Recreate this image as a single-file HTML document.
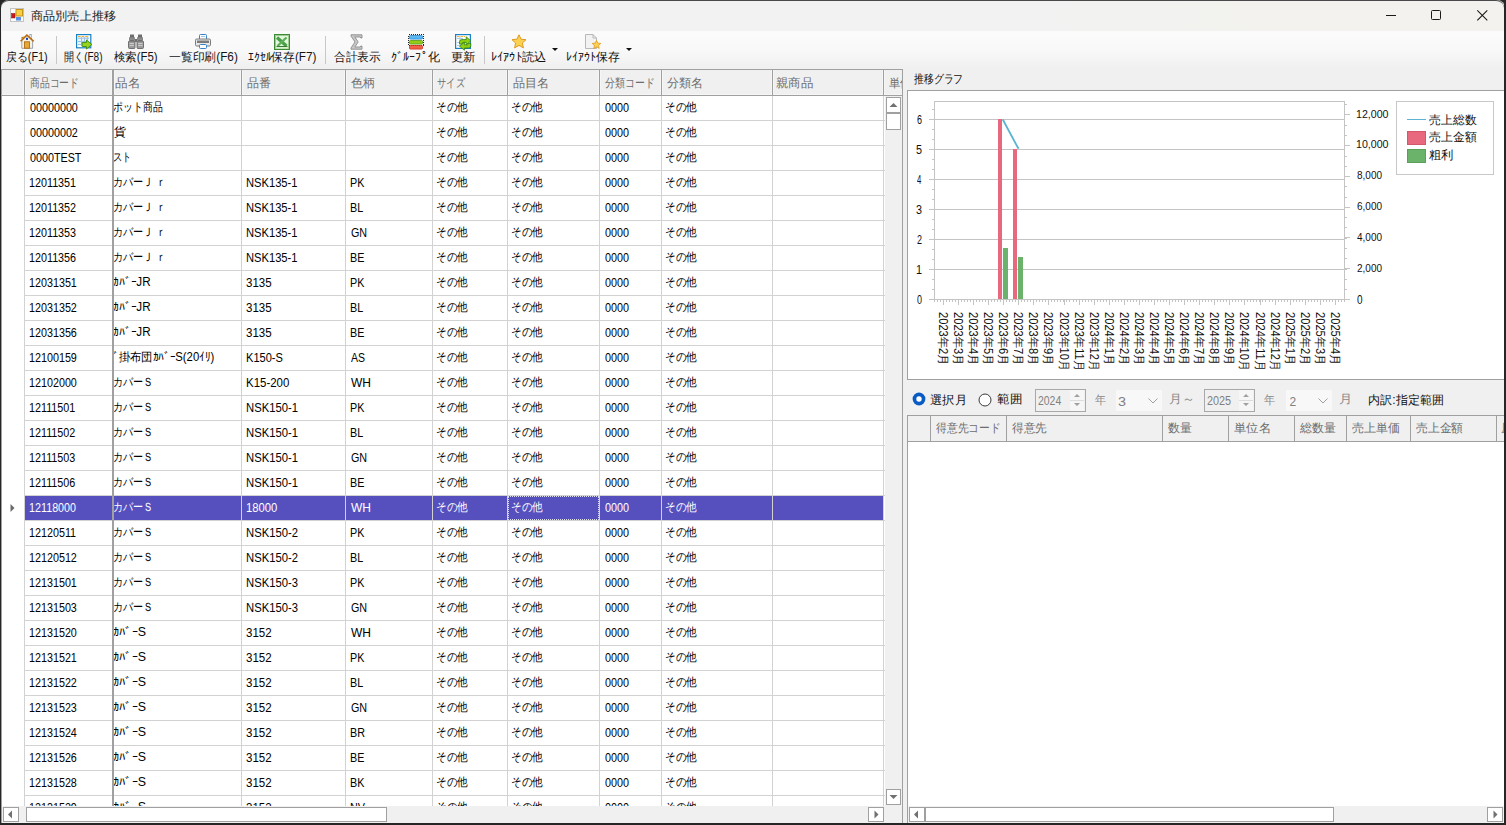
<!DOCTYPE html><html><head><meta charset='utf-8'><style>
*{box-sizing:border-box}
html,body{margin:0;padding:0}
body{width:1506px;height:825px;position:relative;overflow:hidden;background:#262626;font-family:'Liberation Sans', sans-serif;font-size:12px;color:#000}
.abs{position:absolute}
.t{position:absolute;white-space:nowrap;line-height:14px}
svg{position:absolute;overflow:visible}
</style></head><body>
<div class='abs' style='left:1px;top:0px;width:1504px;height:823px;background:#f0f0f0;border-radius:8px 8px 0 0'></div>
<div class='abs' style='left:1px;top:0px;width:1503px;height:31px;background:linear-gradient(to right,#f2f2f2 0,#f2f2f2 1030px,#f3f2ee 1290px,#f3f2ee 100%);border-radius:8px 8px 0 0;border-top:1px solid #4a4a4a'></div>
<svg style='left:10px;top:8px' width='14' height='14' viewBox='0 0 14 14'>
<rect x='0.5' y='0.5' width='13' height='13' fill='#f6f6f6' stroke='#c4c4c4'/>
<path d='M1.5 1.5 H5 V4.5 H1.5 Z M1.5 10 H5 V12.5 H1.5 Z M11 10 H12.5 V12.5 H11 Z' fill='#fff'/>
<rect x='6' y='1.5' width='6.5' height='6.5' fill='#f8cf48' stroke='#c89418' stroke-width='1'/>
<rect x='1.5' y='5.5' width='3.5' height='4.5' fill='#c41a1a' stroke='#901010' stroke-width='0.5'/>
<rect x='6' y='9' width='5' height='3.5' fill='#5a90e8'/>
</svg>
<div class='t' style='left:31.00px;top:8.60px;font-size:12px;transform:scale(1.0120,1.0000);transform-origin:0 0;color:#1b1b1b'>商品別売上推移</div>
<div class='abs' style='left:1386px;top:15px;width:10px;height:1px;background:#1a1a1a'></div>
<div class='abs' style='left:1431px;top:10px;width:10px;height:10px;border:1px solid #1a1a1a;border-radius:1.5px'></div>
<svg style='left:1477px;top:10px' width='11' height='11' viewBox='0 0 11 11'>
<path d='M0.3 0.3 L10.3 10.3 M10.3 0.3 L0.3 10.3' stroke='#1a1a1a' stroke-width='1.1'/></svg>
<div class='abs' style='left:2px;top:31px;width:1502px;height:38px;background:linear-gradient(#fbfbfb 0%,#f9f9f9 50%,#f0f0f0 95%)'></div>
<svg style='left:20px;top:34px' width='15' height='15' viewBox='0 0 15 15'>
<rect x='9.8' y='0.5' width='1.8' height='4.5' fill='#e8eef8' stroke='#9aa4b8' stroke-width='0.7'/>
<path d='M1.8 6.5 V14.3 H12.6 V6.5 L7 1.6 Z' fill='#f4f2e2' stroke='#8a8e98' stroke-width='0.8'/>
<path d='M0.6 7.2 L6.9 1 L13.6 7.4' fill='none' stroke='#b8680c' stroke-width='1.5'/>
<path d='M1.5 5.5 L4.5 2.5 L1.5 3 Z' fill='#c07818'/>
<rect x='4.5' y='7.8' width='5' height='6.4' fill='#e8a838' stroke='#b06a10' stroke-width='0.9'/>
<rect x='6' y='3.8' width='2' height='2.1' fill='#1040c0'/>
</svg>
<svg style='left:76px;top:34px' width='17' height='16' viewBox='0 0 17 16'>
<rect x='0.6' y='0.6' width='14.2' height='13.2' fill='#fff' stroke='#1a80c4' stroke-width='1.2'/>
<path d='M2 2.6 H13' stroke='#f4b030' stroke-width='1.2' stroke-dasharray='2.6 1'/>
<rect x='2' y='3.2' width='11' height='6.5' fill='#e4f4fc'/>
<path d='M2 4.2 H13 M2 7.5 H13 M2 10.5 H6 M5.5 3.2 V12 M8.5 3.2 V9 M11.5 3.2 V8' stroke='#9cc0e8' stroke-width='1'/>
<path d='M6.2 8.5 H10.5 V6 L15.8 10.5 L10.5 15 V12.5 H6.2 Z' fill='#98d418' stroke='#3a8a10' stroke-width='0.9'/>
</svg>
<svg style='left:128px;top:34px' width='16' height='15' viewBox='0 0 16 15'>
<rect x='2' y='0.5' width='4' height='2.5' fill='#707070'/>
<rect x='10' y='0.5' width='4' height='2.5' fill='#707070'/>
<rect x='1.5' y='3' width='5' height='4' rx='1' fill='#8a8a8a' stroke='#606060' stroke-width='0.6'/>
<rect x='9.5' y='3' width='5' height='4' rx='1' fill='#8a8a8a' stroke='#606060' stroke-width='0.6'/>
<rect x='0.5' y='7' width='6.5' height='7.5' rx='1' fill='#9a9a9a' stroke='#5a5a5a' stroke-width='0.8'/>
<rect x='9' y='7' width='6.5' height='7.5' rx='1' fill='#9a9a9a' stroke='#5a5a5a' stroke-width='0.8'/>
<path d='M1.5 9.5 H6 M1.5 11.5 H6 M10 9.5 H14.5 M10 11.5 H14.5' stroke='#d8d8d8' stroke-width='0.8'/>
<rect x='7' y='5' width='2' height='3' fill='#707070'/>
</svg>
<svg style='left:195px;top:34px' width='16' height='15' viewBox='0 0 16 15'>
<rect x='4.5' y='0.5' width='7' height='6' rx='1' fill='#fff' stroke='#3a80c8' stroke-width='1'/>
<rect x='6' y='2' width='4' height='1' fill='#9cc8f0'/>
<rect x='0.5' y='5' width='15' height='7' rx='1.2' fill='#e8e8e8' stroke='#7a7a7a' stroke-width='1'/>
<rect x='2' y='6.5' width='12' height='2.5' fill='#7c7c7c'/>
<rect x='4.5' y='10.5' width='7' height='4' rx='1' fill='#fff' stroke='#3a80c8' stroke-width='1'/>
</svg>
<svg style='left:274px;top:34px' width='16' height='16' viewBox='0 0 16 16'>
<rect x='0.5' y='0.5' width='15' height='15' fill='#e4f6de' stroke='#3c8a34' stroke-width='1'/>
<rect x='1.5' y='1.5' width='13' height='13' fill='none' stroke='#9ccc90' stroke-width='1'/>
<path d='M3 3.5 L12.5 12' stroke='#4aa04a' stroke-width='3.2'/>
<path d='M12.5 3.5 L3.5 12' stroke='#5cb05a' stroke-width='2.4'/>
<path d='M2.5 12.5 H13.5' stroke='#3a7a30' stroke-width='1'/>
<rect x='2' y='13' width='12' height='1.6' fill='#d8f2d0'/>
</svg>
<svg style='left:350px;top:34px' width='13' height='16' viewBox='0 0 13 16'>
<path d='M1 0.8 H12 V4 H10.8 L10.2 3 H4.8 L8.2 8 L4.8 13 H10.2 L10.8 12 H12 V15.2 H1 V14 L5 8 L1 2 Z' fill='#c8c8c8' stroke='#8c8c8c' stroke-width='0.9' stroke-linejoin='round'/>
</svg>
<svg style='left:408px;top:34px' width='16' height='16' viewBox='0 0 16 16'>
<rect x='0.5' y='0.5' width='15' height='11' fill='none' stroke='#222' stroke-width='1' stroke-dasharray='1 1' shape-rendering='crispEdges'/>
<rect x='1.5' y='1.5' width='13' height='3.6' rx='1' fill='#5ab8f0' stroke='#2a88d0' stroke-width='0.8'/>
<rect x='1.5' y='6.5' width='13' height='3.6' rx='1' fill='#90cc18' stroke='#5a9a10' stroke-width='0.8'/>
<rect x='1.5' y='11.5' width='13' height='3.6' rx='1' fill='#f26048' stroke='#d03020' stroke-width='0.8'/>
</svg>
<svg style='left:455px;top:34px' width='17' height='16' viewBox='0 0 17 16'>
<rect x='0.6' y='0.6' width='14.8' height='13.8' fill='#fff' stroke='#1a80c8' stroke-width='1.2'/>
<path d='M2 2.5 H10' stroke='#f4b030' stroke-width='1.2' stroke-dasharray='2.5 1'/>
<path d='M2 4.5 H8 M2 8.5 H5 M2 11.5 H5 M5 3 V13' stroke='#a8ccee' stroke-width='1'/>
<path d='M4.5 10 V7.8 Q4.5 5.6 7 5.6 H11.2 V2.8 L15.8 6.9 L11.2 11 V8.4 H7.6 Q7.2 8.4 7.2 10 Z' fill='#90d010' stroke='#2e8010' stroke-width='0.8'/>
<path d='M15.8 9.5 V11.8 Q15.8 14 13.3 14 H9.4 V16.2 L4.6 12.2 L9.4 8.2 V10.8 H12.6 Q13.2 10.8 13.2 9.5 Z' fill='#90d010' stroke='#2e8010' stroke-width='0.8'/>
</svg>
<svg style='left:511px;top:34px' width='16' height='15' viewBox='0 0 16 15'>
<path d='M8 0.8 L10.1 5.2 L15 5.7 L11.4 9 L12.4 13.9 L8 11.4 L3.6 13.9 L4.6 9 L1 5.7 L5.9 5.2 Z' fill='#fcd050' stroke='#e09a20' stroke-width='1'/>
</svg>
<svg style='left:585px;top:34px' width='17' height='16' viewBox='0 0 17 16'>
<path d='M0.5 0.5 H8 L11.5 4 V14.5 H0.5 Z' fill='#f2f2f2' stroke='#b8b8b8' stroke-width='1'/>
<path d='M8 0.5 V4 H11.5' fill='none' stroke='#b8b8b8' stroke-width='1'/>
<path d='M11.5 6.5 L12.8 9.1 L15.8 9.4 L13.6 11.4 L14.2 14.4 L11.5 12.9 L8.8 14.4 L9.4 11.4 L7.2 9.4 L10.2 9.1 Z' fill='#fcd050' stroke='#e09a20' stroke-width='0.8'/>
</svg>
<div class='t' style='left:5.69px;top:50.40px;font-size:12px;transform:scale(0.9068,1.0000);transform-origin:0 0;color:#141414'>戻る(F1)</div>
<div class='t' style='left:63.86px;top:50.40px;font-size:12px;transform:scale(0.8386,1.0000);transform-origin:0 0;color:#141414'>開く(F8)</div>
<div class='t' style='left:114.20px;top:50.40px;font-size:12px;transform:scale(0.9489,1.0000);transform-origin:0 0;color:#141414'>検索(F5)</div>
<div class='t' style='left:168.62px;top:50.40px;font-size:12px;transform:scale(0.9838,1.0000);transform-origin:0 0;color:#141414'>一覧印刷(F6)</div>
<div class='t' style='left:247.80px;top:50.40px;font-size:12px;transform:scale(0.9783,1.0000);transform-origin:0 0;color:#141414'>ｴｸｾﾙ保存(F7)</div>
<div class='t' style='left:334.00px;top:50.40px;font-size:12px;transform:scale(0.9688,1.0000);transform-origin:0 0;color:#141414'>合計表示</div>
<div class='t' style='left:390.58px;top:50.40px;font-size:12px;transform:scale(1.0170,1.0000);transform-origin:0 0;color:#141414'>ｸﾞﾙｰﾌﾟ化</div>
<div class='t' style='left:450.96px;top:50.40px;font-size:12px;transform:scale(1.0364,1.0000);transform-origin:0 0;color:#141414'>更新</div>
<div class='t' style='left:491.18px;top:50.40px;font-size:12px;transform:scale(1.0231,1.0000);transform-origin:0 0;color:#141414'>ﾚｲｱｳﾄ読込</div>
<div class='t' style='left:565.61px;top:50.40px;font-size:12px;transform:scale(0.9925,1.0000);transform-origin:0 0;color:#141414'>ﾚｲｱｳﾄ保存</div>
<div class='abs' style='left:56px;top:36px;width:1px;height:28px;background:#c8c8c8'></div>
<div class='abs' style='left:325px;top:36px;width:1px;height:28px;background:#c8c8c8'></div>
<div class='abs' style='left:484px;top:36px;width:1px;height:28px;background:#c8c8c8'></div>
<svg style='left:552px;top:48px' width='6' height='3' viewBox='0 0 6 3'><path d='M0 0 H6 L3 3 Z' fill='#111'/></svg>
<svg style='left:626px;top:48px' width='6' height='3' viewBox='0 0 6 3'><path d='M0 0 H6 L3 3 Z' fill='#111'/></svg>
<div class='abs' style='left:1px;top:69px;width:902px;height:754px;background:#fff'></div>
<div class='abs' style='left:2px;top:70px;width:900px;height:25px;background:#f0f0f0'></div>
<div class='t' style='left:30.00px;top:101.00px;font-size:12px;transform:scale(0.8962,1.0000);transform-origin:0 0;color:#000'>00000000</div>
<div class='t' style='left:113.18px;top:100.00px;font-size:12px;transform:scale(0.8241,1.0000);transform-origin:0 0;color:#000'>ポット商品</div>
<div class='t' style='left:436.11px;top:100.00px;font-size:12px;transform:scale(0.8857,1.0000);transform-origin:0 0;color:#000'>その他</div>
<div class='t' style='left:511.11px;top:100.00px;font-size:12px;transform:scale(0.8857,1.0000);transform-origin:0 0;color:#000'>その他</div>
<div class='t' style='left:605.00px;top:101.00px;font-size:12px;transform:scale(0.9000,1.0000);transform-origin:0 0;color:#000'>0000</div>
<div class='t' style='left:665.11px;top:100.00px;font-size:12px;transform:scale(0.8857,1.0000);transform-origin:0 0;color:#000'>その他</div>
<div class='abs' style='left:24px;top:120px;width:861px;height:1px;background:#d2d2d2'></div>
<div class='t' style='left:30.00px;top:126.00px;font-size:12px;transform:scale(0.8962,1.0000);transform-origin:0 0;color:#000'>00000002</div>
<div class='t' style='left:114.00px;top:125.00px;font-size:12px;transform:scale(1.0000,1.0000);transform-origin:0 0;color:#000'>貨</div>
<div class='t' style='left:436.11px;top:125.00px;font-size:12px;transform:scale(0.8857,1.0000);transform-origin:0 0;color:#000'>その他</div>
<div class='t' style='left:511.11px;top:125.00px;font-size:12px;transform:scale(0.8857,1.0000);transform-origin:0 0;color:#000'>その他</div>
<div class='t' style='left:605.00px;top:126.00px;font-size:12px;transform:scale(0.9000,1.0000);transform-origin:0 0;color:#000'>0000</div>
<div class='t' style='left:665.11px;top:125.00px;font-size:12px;transform:scale(0.8857,1.0000);transform-origin:0 0;color:#000'>その他</div>
<div class='abs' style='left:24px;top:145px;width:861px;height:1px;background:#d2d2d2'></div>
<div class='t' style='left:30.00px;top:151.00px;font-size:12px;transform:scale(0.8962,1.0000);transform-origin:0 0;color:#000'>0000TEST</div>
<div class='t' style='left:113.22px;top:150.00px;font-size:12px;transform:scale(0.7750,1.0000);transform-origin:0 0;color:#000'>スト</div>
<div class='t' style='left:436.11px;top:150.00px;font-size:12px;transform:scale(0.8857,1.0000);transform-origin:0 0;color:#000'>その他</div>
<div class='t' style='left:511.11px;top:150.00px;font-size:12px;transform:scale(0.8857,1.0000);transform-origin:0 0;color:#000'>その他</div>
<div class='t' style='left:605.00px;top:151.00px;font-size:12px;transform:scale(0.9000,1.0000);transform-origin:0 0;color:#000'>0000</div>
<div class='t' style='left:665.11px;top:150.00px;font-size:12px;transform:scale(0.8857,1.0000);transform-origin:0 0;color:#000'>その他</div>
<div class='abs' style='left:24px;top:170px;width:861px;height:1px;background:#d2d2d2'></div>
<div class='t' style='left:29.10px;top:176.00px;font-size:12px;transform:scale(0.8962,1.0000);transform-origin:0 0;color:#000'>12011351</div>
<div class='t' style='left:113.16px;top:175.00px;font-size:12px;transform:scale(0.8448,1.0000);transform-origin:0 0;color:#000'>カバーＪ ｒ</div>
<div class='t' style='left:246.07px;top:176.00px;font-size:12px;transform:scale(0.9296,1.0000);transform-origin:0 0;color:#000'>NSK135-1</div>
<div class='t' style='left:350.11px;top:176.00px;font-size:12px;transform:scale(0.8933,1.0000);transform-origin:0 0;color:#000'>PK</div>
<div class='t' style='left:436.11px;top:175.00px;font-size:12px;transform:scale(0.8857,1.0000);transform-origin:0 0;color:#000'>その他</div>
<div class='t' style='left:511.11px;top:175.00px;font-size:12px;transform:scale(0.8857,1.0000);transform-origin:0 0;color:#000'>その他</div>
<div class='t' style='left:605.00px;top:176.00px;font-size:12px;transform:scale(0.9000,1.0000);transform-origin:0 0;color:#000'>0000</div>
<div class='t' style='left:665.11px;top:175.00px;font-size:12px;transform:scale(0.8857,1.0000);transform-origin:0 0;color:#000'>その他</div>
<div class='abs' style='left:24px;top:195px;width:861px;height:1px;background:#d2d2d2'></div>
<div class='t' style='left:29.10px;top:201.00px;font-size:12px;transform:scale(0.8962,1.0000);transform-origin:0 0;color:#000'>12011352</div>
<div class='t' style='left:113.16px;top:200.00px;font-size:12px;transform:scale(0.8448,1.0000);transform-origin:0 0;color:#000'>カバーＪ ｒ</div>
<div class='t' style='left:246.07px;top:201.00px;font-size:12px;transform:scale(0.9296,1.0000);transform-origin:0 0;color:#000'>NSK135-1</div>
<div class='t' style='left:350.10px;top:201.00px;font-size:12px;transform:scale(0.8962,1.0000);transform-origin:0 0;color:#000'>BL</div>
<div class='t' style='left:436.11px;top:200.00px;font-size:12px;transform:scale(0.8857,1.0000);transform-origin:0 0;color:#000'>その他</div>
<div class='t' style='left:511.11px;top:200.00px;font-size:12px;transform:scale(0.8857,1.0000);transform-origin:0 0;color:#000'>その他</div>
<div class='t' style='left:605.00px;top:201.00px;font-size:12px;transform:scale(0.9000,1.0000);transform-origin:0 0;color:#000'>0000</div>
<div class='t' style='left:665.11px;top:200.00px;font-size:12px;transform:scale(0.8857,1.0000);transform-origin:0 0;color:#000'>その他</div>
<div class='abs' style='left:24px;top:220px;width:861px;height:1px;background:#d2d2d2'></div>
<div class='t' style='left:29.10px;top:226.00px;font-size:12px;transform:scale(0.8962,1.0000);transform-origin:0 0;color:#000'>12011353</div>
<div class='t' style='left:113.16px;top:225.00px;font-size:12px;transform:scale(0.8448,1.0000);transform-origin:0 0;color:#000'>カバーＪ ｒ</div>
<div class='t' style='left:246.07px;top:226.00px;font-size:12px;transform:scale(0.9296,1.0000);transform-origin:0 0;color:#000'>NSK135-1</div>
<div class='t' style='left:351.00px;top:226.00px;font-size:12px;transform:scale(0.8962,1.0000);transform-origin:0 0;color:#000'>GN</div>
<div class='t' style='left:436.11px;top:225.00px;font-size:12px;transform:scale(0.8857,1.0000);transform-origin:0 0;color:#000'>その他</div>
<div class='t' style='left:511.11px;top:225.00px;font-size:12px;transform:scale(0.8857,1.0000);transform-origin:0 0;color:#000'>その他</div>
<div class='t' style='left:605.00px;top:226.00px;font-size:12px;transform:scale(0.9000,1.0000);transform-origin:0 0;color:#000'>0000</div>
<div class='t' style='left:665.11px;top:225.00px;font-size:12px;transform:scale(0.8857,1.0000);transform-origin:0 0;color:#000'>その他</div>
<div class='abs' style='left:24px;top:245px;width:861px;height:1px;background:#d2d2d2'></div>
<div class='t' style='left:29.10px;top:251.00px;font-size:12px;transform:scale(0.8962,1.0000);transform-origin:0 0;color:#000'>12011356</div>
<div class='t' style='left:113.16px;top:250.00px;font-size:12px;transform:scale(0.8448,1.0000);transform-origin:0 0;color:#000'>カバーＪ ｒ</div>
<div class='t' style='left:246.07px;top:251.00px;font-size:12px;transform:scale(0.9296,1.0000);transform-origin:0 0;color:#000'>NSK135-1</div>
<div class='t' style='left:350.10px;top:251.00px;font-size:12px;transform:scale(0.8962,1.0000);transform-origin:0 0;color:#000'>BE</div>
<div class='t' style='left:436.11px;top:250.00px;font-size:12px;transform:scale(0.8857,1.0000);transform-origin:0 0;color:#000'>その他</div>
<div class='t' style='left:511.11px;top:250.00px;font-size:12px;transform:scale(0.8857,1.0000);transform-origin:0 0;color:#000'>その他</div>
<div class='t' style='left:605.00px;top:251.00px;font-size:12px;transform:scale(0.9000,1.0000);transform-origin:0 0;color:#000'>0000</div>
<div class='t' style='left:665.11px;top:250.00px;font-size:12px;transform:scale(0.8857,1.0000);transform-origin:0 0;color:#000'>その他</div>
<div class='abs' style='left:24px;top:270px;width:861px;height:1px;background:#d2d2d2'></div>
<div class='t' style='left:29.10px;top:276.00px;font-size:12px;transform:scale(0.8962,1.0000);transform-origin:0 0;color:#000'>12031351</div>
<div class='t' style='left:113.03px;top:275.00px;font-size:12px;transform:scale(0.9730,1.0000);transform-origin:0 0;color:#000'>ｶﾊﾞｰJR</div>
<div class='t' style='left:246.04px;top:276.00px;font-size:12px;transform:scale(0.9600,1.0000);transform-origin:0 0;color:#000'>3135</div>
<div class='t' style='left:350.11px;top:276.00px;font-size:12px;transform:scale(0.8933,1.0000);transform-origin:0 0;color:#000'>PK</div>
<div class='t' style='left:436.11px;top:275.00px;font-size:12px;transform:scale(0.8857,1.0000);transform-origin:0 0;color:#000'>その他</div>
<div class='t' style='left:511.11px;top:275.00px;font-size:12px;transform:scale(0.8857,1.0000);transform-origin:0 0;color:#000'>その他</div>
<div class='t' style='left:605.00px;top:276.00px;font-size:12px;transform:scale(0.9000,1.0000);transform-origin:0 0;color:#000'>0000</div>
<div class='t' style='left:665.11px;top:275.00px;font-size:12px;transform:scale(0.8857,1.0000);transform-origin:0 0;color:#000'>その他</div>
<div class='abs' style='left:24px;top:295px;width:861px;height:1px;background:#d2d2d2'></div>
<div class='t' style='left:29.10px;top:301.00px;font-size:12px;transform:scale(0.8962,1.0000);transform-origin:0 0;color:#000'>12031352</div>
<div class='t' style='left:113.03px;top:300.00px;font-size:12px;transform:scale(0.9730,1.0000);transform-origin:0 0;color:#000'>ｶﾊﾞｰJR</div>
<div class='t' style='left:246.04px;top:301.00px;font-size:12px;transform:scale(0.9600,1.0000);transform-origin:0 0;color:#000'>3135</div>
<div class='t' style='left:350.10px;top:301.00px;font-size:12px;transform:scale(0.8962,1.0000);transform-origin:0 0;color:#000'>BL</div>
<div class='t' style='left:436.11px;top:300.00px;font-size:12px;transform:scale(0.8857,1.0000);transform-origin:0 0;color:#000'>その他</div>
<div class='t' style='left:511.11px;top:300.00px;font-size:12px;transform:scale(0.8857,1.0000);transform-origin:0 0;color:#000'>その他</div>
<div class='t' style='left:605.00px;top:301.00px;font-size:12px;transform:scale(0.9000,1.0000);transform-origin:0 0;color:#000'>0000</div>
<div class='t' style='left:665.11px;top:300.00px;font-size:12px;transform:scale(0.8857,1.0000);transform-origin:0 0;color:#000'>その他</div>
<div class='abs' style='left:24px;top:320px;width:861px;height:1px;background:#d2d2d2'></div>
<div class='t' style='left:29.10px;top:326.00px;font-size:12px;transform:scale(0.8962,1.0000);transform-origin:0 0;color:#000'>12031356</div>
<div class='t' style='left:113.03px;top:325.00px;font-size:12px;transform:scale(0.9730,1.0000);transform-origin:0 0;color:#000'>ｶﾊﾞｰJR</div>
<div class='t' style='left:246.04px;top:326.00px;font-size:12px;transform:scale(0.9600,1.0000);transform-origin:0 0;color:#000'>3135</div>
<div class='t' style='left:350.10px;top:326.00px;font-size:12px;transform:scale(0.8962,1.0000);transform-origin:0 0;color:#000'>BE</div>
<div class='t' style='left:436.11px;top:325.00px;font-size:12px;transform:scale(0.8857,1.0000);transform-origin:0 0;color:#000'>その他</div>
<div class='t' style='left:511.11px;top:325.00px;font-size:12px;transform:scale(0.8857,1.0000);transform-origin:0 0;color:#000'>その他</div>
<div class='t' style='left:605.00px;top:326.00px;font-size:12px;transform:scale(0.9000,1.0000);transform-origin:0 0;color:#000'>0000</div>
<div class='t' style='left:665.11px;top:325.00px;font-size:12px;transform:scale(0.8857,1.0000);transform-origin:0 0;color:#000'>その他</div>
<div class='abs' style='left:24px;top:345px;width:861px;height:1px;background:#d2d2d2'></div>
<div class='t' style='left:29.10px;top:351.00px;font-size:12px;transform:scale(0.8962,1.0000);transform-origin:0 0;color:#000'>12100159</div>
<div class='t' style='left:113.06px;top:350.00px;font-size:12px;transform:scale(0.9434,1.0000);transform-origin:0 0;color:#000'>ﾞ掛布団ｶﾊﾞｰS(20ｲﾘ)</div>
<div class='t' style='left:246.08px;top:351.00px;font-size:12px;transform:scale(0.9231,1.0000);transform-origin:0 0;color:#000'>K150-S</div>
<div class='t' style='left:351.00px;top:351.00px;font-size:12px;transform:scale(0.8750,1.0000);transform-origin:0 0;color:#000'>AS</div>
<div class='t' style='left:436.11px;top:350.00px;font-size:12px;transform:scale(0.8857,1.0000);transform-origin:0 0;color:#000'>その他</div>
<div class='t' style='left:511.11px;top:350.00px;font-size:12px;transform:scale(0.8857,1.0000);transform-origin:0 0;color:#000'>その他</div>
<div class='t' style='left:605.00px;top:351.00px;font-size:12px;transform:scale(0.9000,1.0000);transform-origin:0 0;color:#000'>0000</div>
<div class='t' style='left:665.11px;top:350.00px;font-size:12px;transform:scale(0.8857,1.0000);transform-origin:0 0;color:#000'>その他</div>
<div class='abs' style='left:24px;top:370px;width:861px;height:1px;background:#d2d2d2'></div>
<div class='t' style='left:29.10px;top:376.00px;font-size:12px;transform:scale(0.8962,1.0000);transform-origin:0 0;color:#000'>12102000</div>
<div class='t' style='left:113.16px;top:375.00px;font-size:12px;transform:scale(0.8409,1.0000);transform-origin:0 0;color:#000'>カバーＳ</div>
<div class='t' style='left:246.05px;top:376.00px;font-size:12px;transform:scale(0.9545,1.0000);transform-origin:0 0;color:#000'>K15-200</div>
<div class='t' style='left:351.00px;top:376.00px;font-size:12px;transform:scale(1.0000,1.0000);transform-origin:0 0;color:#000'>WH</div>
<div class='t' style='left:436.11px;top:375.00px;font-size:12px;transform:scale(0.8857,1.0000);transform-origin:0 0;color:#000'>その他</div>
<div class='t' style='left:511.11px;top:375.00px;font-size:12px;transform:scale(0.8857,1.0000);transform-origin:0 0;color:#000'>その他</div>
<div class='t' style='left:605.00px;top:376.00px;font-size:12px;transform:scale(0.9000,1.0000);transform-origin:0 0;color:#000'>0000</div>
<div class='t' style='left:665.11px;top:375.00px;font-size:12px;transform:scale(0.8857,1.0000);transform-origin:0 0;color:#000'>その他</div>
<div class='abs' style='left:24px;top:395px;width:861px;height:1px;background:#d2d2d2'></div>
<div class='t' style='left:29.10px;top:401.00px;font-size:12px;transform:scale(0.8962,1.0000);transform-origin:0 0;color:#000'>12111501</div>
<div class='t' style='left:113.16px;top:400.00px;font-size:12px;transform:scale(0.8409,1.0000);transform-origin:0 0;color:#000'>カバーＳ</div>
<div class='t' style='left:246.06px;top:401.00px;font-size:12px;transform:scale(0.9389,1.0000);transform-origin:0 0;color:#000'>NSK150-1</div>
<div class='t' style='left:350.11px;top:401.00px;font-size:12px;transform:scale(0.8933,1.0000);transform-origin:0 0;color:#000'>PK</div>
<div class='t' style='left:436.11px;top:400.00px;font-size:12px;transform:scale(0.8857,1.0000);transform-origin:0 0;color:#000'>その他</div>
<div class='t' style='left:511.11px;top:400.00px;font-size:12px;transform:scale(0.8857,1.0000);transform-origin:0 0;color:#000'>その他</div>
<div class='t' style='left:605.00px;top:401.00px;font-size:12px;transform:scale(0.9000,1.0000);transform-origin:0 0;color:#000'>0000</div>
<div class='t' style='left:665.11px;top:400.00px;font-size:12px;transform:scale(0.8857,1.0000);transform-origin:0 0;color:#000'>その他</div>
<div class='abs' style='left:24px;top:420px;width:861px;height:1px;background:#d2d2d2'></div>
<div class='t' style='left:29.10px;top:426.00px;font-size:12px;transform:scale(0.8962,1.0000);transform-origin:0 0;color:#000'>12111502</div>
<div class='t' style='left:113.16px;top:425.00px;font-size:12px;transform:scale(0.8409,1.0000);transform-origin:0 0;color:#000'>カバーＳ</div>
<div class='t' style='left:246.06px;top:426.00px;font-size:12px;transform:scale(0.9389,1.0000);transform-origin:0 0;color:#000'>NSK150-1</div>
<div class='t' style='left:350.10px;top:426.00px;font-size:12px;transform:scale(0.8962,1.0000);transform-origin:0 0;color:#000'>BL</div>
<div class='t' style='left:436.11px;top:425.00px;font-size:12px;transform:scale(0.8857,1.0000);transform-origin:0 0;color:#000'>その他</div>
<div class='t' style='left:511.11px;top:425.00px;font-size:12px;transform:scale(0.8857,1.0000);transform-origin:0 0;color:#000'>その他</div>
<div class='t' style='left:605.00px;top:426.00px;font-size:12px;transform:scale(0.9000,1.0000);transform-origin:0 0;color:#000'>0000</div>
<div class='t' style='left:665.11px;top:425.00px;font-size:12px;transform:scale(0.8857,1.0000);transform-origin:0 0;color:#000'>その他</div>
<div class='abs' style='left:24px;top:445px;width:861px;height:1px;background:#d2d2d2'></div>
<div class='t' style='left:29.10px;top:451.00px;font-size:12px;transform:scale(0.8962,1.0000);transform-origin:0 0;color:#000'>12111503</div>
<div class='t' style='left:113.16px;top:450.00px;font-size:12px;transform:scale(0.8409,1.0000);transform-origin:0 0;color:#000'>カバーＳ</div>
<div class='t' style='left:246.06px;top:451.00px;font-size:12px;transform:scale(0.9389,1.0000);transform-origin:0 0;color:#000'>NSK150-1</div>
<div class='t' style='left:351.00px;top:451.00px;font-size:12px;transform:scale(0.8962,1.0000);transform-origin:0 0;color:#000'>GN</div>
<div class='t' style='left:436.11px;top:450.00px;font-size:12px;transform:scale(0.8857,1.0000);transform-origin:0 0;color:#000'>その他</div>
<div class='t' style='left:511.11px;top:450.00px;font-size:12px;transform:scale(0.8857,1.0000);transform-origin:0 0;color:#000'>その他</div>
<div class='t' style='left:605.00px;top:451.00px;font-size:12px;transform:scale(0.9000,1.0000);transform-origin:0 0;color:#000'>0000</div>
<div class='t' style='left:665.11px;top:450.00px;font-size:12px;transform:scale(0.8857,1.0000);transform-origin:0 0;color:#000'>その他</div>
<div class='abs' style='left:24px;top:470px;width:861px;height:1px;background:#d2d2d2'></div>
<div class='t' style='left:29.10px;top:476.00px;font-size:12px;transform:scale(0.8962,1.0000);transform-origin:0 0;color:#000'>12111506</div>
<div class='t' style='left:113.16px;top:475.00px;font-size:12px;transform:scale(0.8409,1.0000);transform-origin:0 0;color:#000'>カバーＳ</div>
<div class='t' style='left:246.06px;top:476.00px;font-size:12px;transform:scale(0.9389,1.0000);transform-origin:0 0;color:#000'>NSK150-1</div>
<div class='t' style='left:350.10px;top:476.00px;font-size:12px;transform:scale(0.8962,1.0000);transform-origin:0 0;color:#000'>BE</div>
<div class='t' style='left:436.11px;top:475.00px;font-size:12px;transform:scale(0.8857,1.0000);transform-origin:0 0;color:#000'>その他</div>
<div class='t' style='left:511.11px;top:475.00px;font-size:12px;transform:scale(0.8857,1.0000);transform-origin:0 0;color:#000'>その他</div>
<div class='t' style='left:605.00px;top:476.00px;font-size:12px;transform:scale(0.9000,1.0000);transform-origin:0 0;color:#000'>0000</div>
<div class='t' style='left:665.11px;top:475.00px;font-size:12px;transform:scale(0.8857,1.0000);transform-origin:0 0;color:#000'>その他</div>
<div class='abs' style='left:24px;top:495px;width:861px;height:1px;background:#d2d2d2'></div>
<div class='abs' style='left:25px;top:496px;width:859px;height:24px;background:#5650bf'></div>
<div class='t' style='left:29.10px;top:501.00px;font-size:12px;transform:scale(0.8962,1.0000);transform-origin:0 0;color:#fff'>12118000</div>
<div class='t' style='left:113.16px;top:500.00px;font-size:12px;transform:scale(0.8409,1.0000);transform-origin:0 0;color:#fff'>カバーＳ</div>
<div class='t' style='left:246.06px;top:501.00px;font-size:12px;transform:scale(0.9375,1.0000);transform-origin:0 0;color:#fff'>18000</div>
<div class='t' style='left:351.00px;top:501.00px;font-size:12px;transform:scale(1.0000,1.0000);transform-origin:0 0;color:#fff'>WH</div>
<div class='t' style='left:436.11px;top:500.00px;font-size:12px;transform:scale(0.8857,1.0000);transform-origin:0 0;color:#fff'>その他</div>
<div class='t' style='left:511.11px;top:500.00px;font-size:12px;transform:scale(0.8857,1.0000);transform-origin:0 0;color:#fff'>その他</div>
<div class='t' style='left:605.00px;top:501.00px;font-size:12px;transform:scale(0.9000,1.0000);transform-origin:0 0;color:#fff'>0000</div>
<div class='t' style='left:665.11px;top:500.00px;font-size:12px;transform:scale(0.8857,1.0000);transform-origin:0 0;color:#fff'>その他</div>
<div class='abs' style='left:24px;top:520px;width:861px;height:1px;background:#d2d2d2'></div>
<div class='t' style='left:29.10px;top:526.00px;font-size:12px;transform:scale(0.8962,1.0000);transform-origin:0 0;color:#000'>12120511</div>
<div class='t' style='left:113.16px;top:525.00px;font-size:12px;transform:scale(0.8409,1.0000);transform-origin:0 0;color:#000'>カバーＳ</div>
<div class='t' style='left:246.06px;top:526.00px;font-size:12px;transform:scale(0.9389,1.0000);transform-origin:0 0;color:#000'>NSK150-2</div>
<div class='t' style='left:350.11px;top:526.00px;font-size:12px;transform:scale(0.8933,1.0000);transform-origin:0 0;color:#000'>PK</div>
<div class='t' style='left:436.11px;top:525.00px;font-size:12px;transform:scale(0.8857,1.0000);transform-origin:0 0;color:#000'>その他</div>
<div class='t' style='left:511.11px;top:525.00px;font-size:12px;transform:scale(0.8857,1.0000);transform-origin:0 0;color:#000'>その他</div>
<div class='t' style='left:605.00px;top:526.00px;font-size:12px;transform:scale(0.9000,1.0000);transform-origin:0 0;color:#000'>0000</div>
<div class='t' style='left:665.11px;top:525.00px;font-size:12px;transform:scale(0.8857,1.0000);transform-origin:0 0;color:#000'>その他</div>
<div class='abs' style='left:24px;top:545px;width:861px;height:1px;background:#d2d2d2'></div>
<div class='t' style='left:29.10px;top:551.00px;font-size:12px;transform:scale(0.8962,1.0000);transform-origin:0 0;color:#000'>12120512</div>
<div class='t' style='left:113.16px;top:550.00px;font-size:12px;transform:scale(0.8409,1.0000);transform-origin:0 0;color:#000'>カバーＳ</div>
<div class='t' style='left:246.06px;top:551.00px;font-size:12px;transform:scale(0.9389,1.0000);transform-origin:0 0;color:#000'>NSK150-2</div>
<div class='t' style='left:350.10px;top:551.00px;font-size:12px;transform:scale(0.8962,1.0000);transform-origin:0 0;color:#000'>BL</div>
<div class='t' style='left:436.11px;top:550.00px;font-size:12px;transform:scale(0.8857,1.0000);transform-origin:0 0;color:#000'>その他</div>
<div class='t' style='left:511.11px;top:550.00px;font-size:12px;transform:scale(0.8857,1.0000);transform-origin:0 0;color:#000'>その他</div>
<div class='t' style='left:605.00px;top:551.00px;font-size:12px;transform:scale(0.9000,1.0000);transform-origin:0 0;color:#000'>0000</div>
<div class='t' style='left:665.11px;top:550.00px;font-size:12px;transform:scale(0.8857,1.0000);transform-origin:0 0;color:#000'>その他</div>
<div class='abs' style='left:24px;top:570px;width:861px;height:1px;background:#d2d2d2'></div>
<div class='t' style='left:29.10px;top:576.00px;font-size:12px;transform:scale(0.8962,1.0000);transform-origin:0 0;color:#000'>12131501</div>
<div class='t' style='left:113.16px;top:575.00px;font-size:12px;transform:scale(0.8409,1.0000);transform-origin:0 0;color:#000'>カバーＳ</div>
<div class='t' style='left:246.06px;top:576.00px;font-size:12px;transform:scale(0.9389,1.0000);transform-origin:0 0;color:#000'>NSK150-3</div>
<div class='t' style='left:350.11px;top:576.00px;font-size:12px;transform:scale(0.8933,1.0000);transform-origin:0 0;color:#000'>PK</div>
<div class='t' style='left:436.11px;top:575.00px;font-size:12px;transform:scale(0.8857,1.0000);transform-origin:0 0;color:#000'>その他</div>
<div class='t' style='left:511.11px;top:575.00px;font-size:12px;transform:scale(0.8857,1.0000);transform-origin:0 0;color:#000'>その他</div>
<div class='t' style='left:605.00px;top:576.00px;font-size:12px;transform:scale(0.9000,1.0000);transform-origin:0 0;color:#000'>0000</div>
<div class='t' style='left:665.11px;top:575.00px;font-size:12px;transform:scale(0.8857,1.0000);transform-origin:0 0;color:#000'>その他</div>
<div class='abs' style='left:24px;top:595px;width:861px;height:1px;background:#d2d2d2'></div>
<div class='t' style='left:29.10px;top:601.00px;font-size:12px;transform:scale(0.8962,1.0000);transform-origin:0 0;color:#000'>12131503</div>
<div class='t' style='left:113.16px;top:600.00px;font-size:12px;transform:scale(0.8409,1.0000);transform-origin:0 0;color:#000'>カバーＳ</div>
<div class='t' style='left:246.06px;top:601.00px;font-size:12px;transform:scale(0.9389,1.0000);transform-origin:0 0;color:#000'>NSK150-3</div>
<div class='t' style='left:351.00px;top:601.00px;font-size:12px;transform:scale(0.8962,1.0000);transform-origin:0 0;color:#000'>GN</div>
<div class='t' style='left:436.11px;top:600.00px;font-size:12px;transform:scale(0.8857,1.0000);transform-origin:0 0;color:#000'>その他</div>
<div class='t' style='left:511.11px;top:600.00px;font-size:12px;transform:scale(0.8857,1.0000);transform-origin:0 0;color:#000'>その他</div>
<div class='t' style='left:605.00px;top:601.00px;font-size:12px;transform:scale(0.9000,1.0000);transform-origin:0 0;color:#000'>0000</div>
<div class='t' style='left:665.11px;top:600.00px;font-size:12px;transform:scale(0.8857,1.0000);transform-origin:0 0;color:#000'>その他</div>
<div class='abs' style='left:24px;top:620px;width:861px;height:1px;background:#d2d2d2'></div>
<div class='t' style='left:29.10px;top:626.00px;font-size:12px;transform:scale(0.8962,1.0000);transform-origin:0 0;color:#000'>12131520</div>
<div class='t' style='left:112.97px;top:625.00px;font-size:12px;transform:scale(1.0323,1.0000);transform-origin:0 0;color:#000'>ｶﾊﾞｰS</div>
<div class='t' style='left:246.04px;top:626.00px;font-size:12px;transform:scale(0.9600,1.0000);transform-origin:0 0;color:#000'>3152</div>
<div class='t' style='left:351.00px;top:626.00px;font-size:12px;transform:scale(1.0000,1.0000);transform-origin:0 0;color:#000'>WH</div>
<div class='t' style='left:436.11px;top:625.00px;font-size:12px;transform:scale(0.8857,1.0000);transform-origin:0 0;color:#000'>その他</div>
<div class='t' style='left:511.11px;top:625.00px;font-size:12px;transform:scale(0.8857,1.0000);transform-origin:0 0;color:#000'>その他</div>
<div class='t' style='left:605.00px;top:626.00px;font-size:12px;transform:scale(0.9000,1.0000);transform-origin:0 0;color:#000'>0000</div>
<div class='t' style='left:665.11px;top:625.00px;font-size:12px;transform:scale(0.8857,1.0000);transform-origin:0 0;color:#000'>その他</div>
<div class='abs' style='left:24px;top:645px;width:861px;height:1px;background:#d2d2d2'></div>
<div class='t' style='left:29.10px;top:651.00px;font-size:12px;transform:scale(0.8962,1.0000);transform-origin:0 0;color:#000'>12131521</div>
<div class='t' style='left:112.97px;top:650.00px;font-size:12px;transform:scale(1.0323,1.0000);transform-origin:0 0;color:#000'>ｶﾊﾞｰS</div>
<div class='t' style='left:246.04px;top:651.00px;font-size:12px;transform:scale(0.9600,1.0000);transform-origin:0 0;color:#000'>3152</div>
<div class='t' style='left:350.11px;top:651.00px;font-size:12px;transform:scale(0.8933,1.0000);transform-origin:0 0;color:#000'>PK</div>
<div class='t' style='left:436.11px;top:650.00px;font-size:12px;transform:scale(0.8857,1.0000);transform-origin:0 0;color:#000'>その他</div>
<div class='t' style='left:511.11px;top:650.00px;font-size:12px;transform:scale(0.8857,1.0000);transform-origin:0 0;color:#000'>その他</div>
<div class='t' style='left:605.00px;top:651.00px;font-size:12px;transform:scale(0.9000,1.0000);transform-origin:0 0;color:#000'>0000</div>
<div class='t' style='left:665.11px;top:650.00px;font-size:12px;transform:scale(0.8857,1.0000);transform-origin:0 0;color:#000'>その他</div>
<div class='abs' style='left:24px;top:670px;width:861px;height:1px;background:#d2d2d2'></div>
<div class='t' style='left:29.10px;top:676.00px;font-size:12px;transform:scale(0.8962,1.0000);transform-origin:0 0;color:#000'>12131522</div>
<div class='t' style='left:112.97px;top:675.00px;font-size:12px;transform:scale(1.0323,1.0000);transform-origin:0 0;color:#000'>ｶﾊﾞｰS</div>
<div class='t' style='left:246.04px;top:676.00px;font-size:12px;transform:scale(0.9600,1.0000);transform-origin:0 0;color:#000'>3152</div>
<div class='t' style='left:350.10px;top:676.00px;font-size:12px;transform:scale(0.8962,1.0000);transform-origin:0 0;color:#000'>BL</div>
<div class='t' style='left:436.11px;top:675.00px;font-size:12px;transform:scale(0.8857,1.0000);transform-origin:0 0;color:#000'>その他</div>
<div class='t' style='left:511.11px;top:675.00px;font-size:12px;transform:scale(0.8857,1.0000);transform-origin:0 0;color:#000'>その他</div>
<div class='t' style='left:605.00px;top:676.00px;font-size:12px;transform:scale(0.9000,1.0000);transform-origin:0 0;color:#000'>0000</div>
<div class='t' style='left:665.11px;top:675.00px;font-size:12px;transform:scale(0.8857,1.0000);transform-origin:0 0;color:#000'>その他</div>
<div class='abs' style='left:24px;top:695px;width:861px;height:1px;background:#d2d2d2'></div>
<div class='t' style='left:29.10px;top:701.00px;font-size:12px;transform:scale(0.8962,1.0000);transform-origin:0 0;color:#000'>12131523</div>
<div class='t' style='left:112.97px;top:700.00px;font-size:12px;transform:scale(1.0323,1.0000);transform-origin:0 0;color:#000'>ｶﾊﾞｰS</div>
<div class='t' style='left:246.04px;top:701.00px;font-size:12px;transform:scale(0.9600,1.0000);transform-origin:0 0;color:#000'>3152</div>
<div class='t' style='left:351.00px;top:701.00px;font-size:12px;transform:scale(0.8962,1.0000);transform-origin:0 0;color:#000'>GN</div>
<div class='t' style='left:436.11px;top:700.00px;font-size:12px;transform:scale(0.8857,1.0000);transform-origin:0 0;color:#000'>その他</div>
<div class='t' style='left:511.11px;top:700.00px;font-size:12px;transform:scale(0.8857,1.0000);transform-origin:0 0;color:#000'>その他</div>
<div class='t' style='left:605.00px;top:701.00px;font-size:12px;transform:scale(0.9000,1.0000);transform-origin:0 0;color:#000'>0000</div>
<div class='t' style='left:665.11px;top:700.00px;font-size:12px;transform:scale(0.8857,1.0000);transform-origin:0 0;color:#000'>その他</div>
<div class='abs' style='left:24px;top:720px;width:861px;height:1px;background:#d2d2d2'></div>
<div class='t' style='left:29.10px;top:726.00px;font-size:12px;transform:scale(0.8962,1.0000);transform-origin:0 0;color:#000'>12131524</div>
<div class='t' style='left:112.97px;top:725.00px;font-size:12px;transform:scale(1.0323,1.0000);transform-origin:0 0;color:#000'>ｶﾊﾞｰS</div>
<div class='t' style='left:246.04px;top:726.00px;font-size:12px;transform:scale(0.9600,1.0000);transform-origin:0 0;color:#000'>3152</div>
<div class='t' style='left:350.10px;top:726.00px;font-size:12px;transform:scale(0.8962,1.0000);transform-origin:0 0;color:#000'>BR</div>
<div class='t' style='left:436.11px;top:725.00px;font-size:12px;transform:scale(0.8857,1.0000);transform-origin:0 0;color:#000'>その他</div>
<div class='t' style='left:511.11px;top:725.00px;font-size:12px;transform:scale(0.8857,1.0000);transform-origin:0 0;color:#000'>その他</div>
<div class='t' style='left:605.00px;top:726.00px;font-size:12px;transform:scale(0.9000,1.0000);transform-origin:0 0;color:#000'>0000</div>
<div class='t' style='left:665.11px;top:725.00px;font-size:12px;transform:scale(0.8857,1.0000);transform-origin:0 0;color:#000'>その他</div>
<div class='abs' style='left:24px;top:745px;width:861px;height:1px;background:#d2d2d2'></div>
<div class='t' style='left:29.10px;top:751.00px;font-size:12px;transform:scale(0.8962,1.0000);transform-origin:0 0;color:#000'>12131526</div>
<div class='t' style='left:112.97px;top:750.00px;font-size:12px;transform:scale(1.0323,1.0000);transform-origin:0 0;color:#000'>ｶﾊﾞｰS</div>
<div class='t' style='left:246.04px;top:751.00px;font-size:12px;transform:scale(0.9600,1.0000);transform-origin:0 0;color:#000'>3152</div>
<div class='t' style='left:350.10px;top:751.00px;font-size:12px;transform:scale(0.8962,1.0000);transform-origin:0 0;color:#000'>BE</div>
<div class='t' style='left:436.11px;top:750.00px;font-size:12px;transform:scale(0.8857,1.0000);transform-origin:0 0;color:#000'>その他</div>
<div class='t' style='left:511.11px;top:750.00px;font-size:12px;transform:scale(0.8857,1.0000);transform-origin:0 0;color:#000'>その他</div>
<div class='t' style='left:605.00px;top:751.00px;font-size:12px;transform:scale(0.9000,1.0000);transform-origin:0 0;color:#000'>0000</div>
<div class='t' style='left:665.11px;top:750.00px;font-size:12px;transform:scale(0.8857,1.0000);transform-origin:0 0;color:#000'>その他</div>
<div class='abs' style='left:24px;top:770px;width:861px;height:1px;background:#d2d2d2'></div>
<div class='t' style='left:29.10px;top:776.00px;font-size:12px;transform:scale(0.8962,1.0000);transform-origin:0 0;color:#000'>12131528</div>
<div class='t' style='left:112.97px;top:775.00px;font-size:12px;transform:scale(1.0323,1.0000);transform-origin:0 0;color:#000'>ｶﾊﾞｰS</div>
<div class='t' style='left:246.04px;top:776.00px;font-size:12px;transform:scale(0.9600,1.0000);transform-origin:0 0;color:#000'>3152</div>
<div class='t' style='left:350.10px;top:776.00px;font-size:12px;transform:scale(0.8962,1.0000);transform-origin:0 0;color:#000'>BK</div>
<div class='t' style='left:436.11px;top:775.00px;font-size:12px;transform:scale(0.8857,1.0000);transform-origin:0 0;color:#000'>その他</div>
<div class='t' style='left:511.11px;top:775.00px;font-size:12px;transform:scale(0.8857,1.0000);transform-origin:0 0;color:#000'>その他</div>
<div class='t' style='left:605.00px;top:776.00px;font-size:12px;transform:scale(0.9000,1.0000);transform-origin:0 0;color:#000'>0000</div>
<div class='t' style='left:665.11px;top:775.00px;font-size:12px;transform:scale(0.8857,1.0000);transform-origin:0 0;color:#000'>その他</div>
<div class='abs' style='left:24px;top:795px;width:861px;height:1px;background:#d2d2d2'></div>
<div class='t' style='left:29.10px;top:801.00px;font-size:12px;transform:scale(0.8962,1.0000);transform-origin:0 0;color:#000'>12131529</div>
<div class='t' style='left:112.97px;top:800.00px;font-size:12px;transform:scale(1.0323,1.0000);transform-origin:0 0;color:#000'>ｶﾊﾞｰS</div>
<div class='t' style='left:246.04px;top:801.00px;font-size:12px;transform:scale(0.9600,1.0000);transform-origin:0 0;color:#000'>3152</div>
<div class='t' style='left:350.10px;top:801.00px;font-size:12px;transform:scale(0.8962,1.0000);transform-origin:0 0;color:#000'>NV</div>
<div class='t' style='left:436.11px;top:800.00px;font-size:12px;transform:scale(0.8857,1.0000);transform-origin:0 0;color:#000'>その他</div>
<div class='t' style='left:511.11px;top:800.00px;font-size:12px;transform:scale(0.8857,1.0000);transform-origin:0 0;color:#000'>その他</div>
<div class='t' style='left:605.00px;top:801.00px;font-size:12px;transform:scale(0.9000,1.0000);transform-origin:0 0;color:#000'>0000</div>
<div class='t' style='left:665.11px;top:800.00px;font-size:12px;transform:scale(0.8857,1.0000);transform-origin:0 0;color:#000'>その他</div>
<div class='abs' style='left:24px;top:820px;width:861px;height:1px;background:#d2d2d2'></div>
<div class='abs' style='left:24px;top:96px;width:1px;height:710px;background:#d2d2d2'></div>
<div class='abs' style='left:112px;top:96px;width:2px;height:710px;background:#a0a0a0'></div>
<div class='abs' style='left:241px;top:96px;width:1px;height:710px;background:#d2d2d2'></div>
<div class='abs' style='left:345px;top:96px;width:1px;height:710px;background:#d2d2d2'></div>
<div class='abs' style='left:432px;top:96px;width:1px;height:710px;background:#d2d2d2'></div>
<div class='abs' style='left:507px;top:96px;width:1px;height:710px;background:#d2d2d2'></div>
<div class='abs' style='left:599px;top:96px;width:1px;height:710px;background:#d2d2d2'></div>
<div class='abs' style='left:661px;top:96px;width:1px;height:710px;background:#d2d2d2'></div>
<div class='abs' style='left:772px;top:96px;width:1px;height:710px;background:#d2d2d2'></div>
<div class='abs' style='left:883px;top:96px;width:1px;height:710px;background:#d2d2d2'></div>
<div class='t' style='left:29.50px;top:76.00px;font-size:12px;transform:scale(0.8190,1.0000);transform-origin:0 0;color:#6d6d6d'>商品コード</div>
<div class='abs' style='left:24px;top:69px;width:1px;height:27px;background:#a0a0a0'></div>
<div class='t' style='left:114.50px;top:76.00px;font-size:12px;transform:scale(1.0455,1.0000);transform-origin:0 0;color:#6d6d6d'>品名</div>
<div class='abs' style='left:112px;top:69px;width:2px;height:27px;background:#a0a0a0'></div>
<div class='t' style='left:246.50px;top:76.00px;font-size:12px;transform:scale(1.0000,1.0000);transform-origin:0 0;color:#6d6d6d'>品番</div>
<div class='abs' style='left:241px;top:69px;width:1px;height:27px;background:#a0a0a0'></div>
<div class='t' style='left:350.50px;top:76.00px;font-size:12px;transform:scale(1.0000,1.0000);transform-origin:0 0;color:#6d6d6d'>色柄</div>
<div class='abs' style='left:345px;top:69px;width:1px;height:27px;background:#a0a0a0'></div>
<div class='t' style='left:436.73px;top:76.00px;font-size:12px;transform:scale(0.7714,1.0000);transform-origin:0 0;color:#6d6d6d'>サイズ</div>
<div class='abs' style='left:432px;top:69px;width:1px;height:27px;background:#a0a0a0'></div>
<div class='t' style='left:512.50px;top:76.00px;font-size:12px;transform:scale(1.0118,1.0000);transform-origin:0 0;color:#6d6d6d'>品目名</div>
<div class='abs' style='left:507px;top:69px;width:1px;height:27px;background:#a0a0a0'></div>
<div class='t' style='left:604.50px;top:76.00px;font-size:12px;transform:scale(0.8276,1.0000);transform-origin:0 0;color:#6d6d6d'>分類コード</div>
<div class='abs' style='left:599px;top:69px;width:1px;height:27px;background:#a0a0a0'></div>
<div class='t' style='left:666.50px;top:76.00px;font-size:12px;transform:scale(1.0059,1.0000);transform-origin:0 0;color:#6d6d6d'>分類名</div>
<div class='abs' style='left:661px;top:69px;width:1px;height:27px;background:#a0a0a0'></div>
<div class='t' style='left:776.46px;top:76.00px;font-size:12px;transform:scale(1.0382,1.0000);transform-origin:0 0;color:#6d6d6d'>親商品</div>
<div class='abs' style='left:772px;top:69px;width:1px;height:27px;background:#a0a0a0'></div>
<div class='abs' style='left:884px;top:70px;width:18px;height:25px;overflow:hidden'>
<div class='t' style='left:4.50px;top:6.00px;font-size:12px;transform:scale(0.9583,1.0000);transform-origin:0 0;color:#6d6d6d'>単位</div>
</div>
<div class='abs' style='left:883px;top:69px;width:1px;height:27px;background:#a0a0a0'></div>
<div class='abs' style='left:2px;top:94px;width:900px;height:1px;background:#f6f6f6'></div>
<div class='abs' style='left:23px;top:70px;width:1px;height:24px;background:#f6f6f6'></div>
<div class='abs' style='left:25px;top:70px;width:1px;height:24px;background:#f6f6f6'></div>
<div class='abs' style='left:24px;top:69px;width:1px;height:27px;background:#a0a0a0'></div>
<div class='abs' style='left:111px;top:70px;width:1px;height:24px;background:#f6f6f6'></div>
<div class='abs' style='left:114px;top:70px;width:1px;height:24px;background:#f6f6f6'></div>
<div class='abs' style='left:112px;top:69px;width:2px;height:27px;background:#a0a0a0'></div>
<div class='abs' style='left:240px;top:70px;width:1px;height:24px;background:#f6f6f6'></div>
<div class='abs' style='left:242px;top:70px;width:1px;height:24px;background:#f6f6f6'></div>
<div class='abs' style='left:241px;top:69px;width:1px;height:27px;background:#a0a0a0'></div>
<div class='abs' style='left:344px;top:70px;width:1px;height:24px;background:#f6f6f6'></div>
<div class='abs' style='left:346px;top:70px;width:1px;height:24px;background:#f6f6f6'></div>
<div class='abs' style='left:345px;top:69px;width:1px;height:27px;background:#a0a0a0'></div>
<div class='abs' style='left:431px;top:70px;width:1px;height:24px;background:#f6f6f6'></div>
<div class='abs' style='left:433px;top:70px;width:1px;height:24px;background:#f6f6f6'></div>
<div class='abs' style='left:432px;top:69px;width:1px;height:27px;background:#a0a0a0'></div>
<div class='abs' style='left:506px;top:70px;width:1px;height:24px;background:#f6f6f6'></div>
<div class='abs' style='left:508px;top:70px;width:1px;height:24px;background:#f6f6f6'></div>
<div class='abs' style='left:507px;top:69px;width:1px;height:27px;background:#a0a0a0'></div>
<div class='abs' style='left:598px;top:70px;width:1px;height:24px;background:#f6f6f6'></div>
<div class='abs' style='left:600px;top:70px;width:1px;height:24px;background:#f6f6f6'></div>
<div class='abs' style='left:599px;top:69px;width:1px;height:27px;background:#a0a0a0'></div>
<div class='abs' style='left:660px;top:70px;width:1px;height:24px;background:#f6f6f6'></div>
<div class='abs' style='left:662px;top:70px;width:1px;height:24px;background:#f6f6f6'></div>
<div class='abs' style='left:661px;top:69px;width:1px;height:27px;background:#a0a0a0'></div>
<div class='abs' style='left:771px;top:70px;width:1px;height:24px;background:#f6f6f6'></div>
<div class='abs' style='left:773px;top:70px;width:1px;height:24px;background:#f6f6f6'></div>
<div class='abs' style='left:772px;top:69px;width:1px;height:27px;background:#a0a0a0'></div>
<div class='abs' style='left:882px;top:70px;width:1px;height:24px;background:#f6f6f6'></div>
<div class='abs' style='left:884px;top:70px;width:1px;height:24px;background:#f6f6f6'></div>
<div class='abs' style='left:883px;top:69px;width:1px;height:27px;background:#a0a0a0'></div>
<div class='abs' style='left:1px;top:69px;width:902px;height:1px;background:#a0a0a0'></div>
<div class='abs' style='left:1px;top:95px;width:902px;height:1px;background:#a0a0a0'></div>
<div class='abs' style='left:1px;top:69px;width:1px;height:754px;background:#a0a0a0'></div>
<div class='abs' style='left:902px;top:69px;width:1px;height:754px;background:#a0a0a0'></div>
<svg style='left:10px;top:504px' width='5' height='8' viewBox='0 0 5 8'><path d='M0.5 0 L4.5 4 L0.5 8 Z' fill='#6a6a6a'/></svg>
<div class='abs' style='left:508px;top:496px;width:91px;height:24px;border:1px dotted #dcdcf0'></div>
<div class='abs' style='left:885px;top:96px;width:17px;height:710px;background:#f0f0f0'></div>
<div class='abs' style='left:886px;top:97px;width:15px;height:16px;background:#fff;border:1px solid #a0a0a0'></div>
<svg style='left:0;top:0' width='1506' height='825'><path d='M889.5 107.0 L893.5 103.0 L897.5 107.0 Z' fill='#707070'/></svg>
<div class='abs' style='left:886px;top:113px;width:15px;height:17px;background:#fff;border:1px solid #a0a0a0'></div>
<div class='abs' style='left:886px;top:789px;width:15px;height:16px;background:#fff;border:1px solid #a0a0a0'></div>
<svg style='left:0;top:0' width='1506' height='825'><path d='M889.5 795.0 L893.5 799.0 L897.5 795.0 Z' fill='#707070'/></svg>
<div class='abs' style='left:2px;top:806px;width:900px;height:17px;background:#f0f0f0'></div>
<div class='abs' style='left:3px;top:807px;width:16px;height:15px;background:#fff;border:1px solid #a0a0a0'></div>
<svg style='left:0;top:0' width='1506' height='825'><path d='M12.0 810.5 L8.0 814.5 L12.0 818.5 Z' fill='#707070'/></svg>
<div class='abs' style='left:26px;top:807px;width:361px;height:15px;background:#fff;border:1px solid #a0a0a0'></div>
<div class='abs' style='left:868px;top:807px;width:16px;height:15px;background:#fff;border:1px solid #a0a0a0'></div>
<svg style='left:0;top:0' width='1506' height='825'><path d='M874.5 810.5 L878.5 814.5 L874.5 818.5 Z' fill='#707070'/></svg>
<div class='t' style='left:913.50px;top:72.00px;font-size:12px;transform:scale(0.8220,1.0000);transform-origin:0 0;color:#111'>推移グラフ</div>
<div class='abs' style='left:907px;top:90px;width:597px;height:290px;background:#fff;border:1px solid #a0a0a0;border-right:none'></div>
<svg style='left:0;top:0' width='1506' height='825' viewBox='0 0 1506 825' shape-rendering='crispEdges'><line x1='929' y1='299.5' x2='1345' y2='299.5' stroke='#c4c4c4'/><line x1='929' y1='269.5' x2='1345' y2='269.5' stroke='#c4c4c4'/><line x1='929' y1='239.5' x2='1345' y2='239.5' stroke='#c4c4c4'/><line x1='929' y1='209.5' x2='1345' y2='209.5' stroke='#c4c4c4'/><line x1='929' y1='179.5' x2='1345' y2='179.5' stroke='#c4c4c4'/><line x1='929' y1='149.5' x2='1345' y2='149.5' stroke='#c4c4c4'/><line x1='929' y1='119.5' x2='1345' y2='119.5' stroke='#c4c4c4'/><rect x='934.5' y='101.5' width='410' height='198' fill='none' stroke='#c4c4c4'/><line x1='932' y1='299.5' x2='935' y2='299.5' stroke='#c4c4c4'/><line x1='932' y1='289.5' x2='935' y2='289.5' stroke='#c4c4c4'/><line x1='932' y1='279.5' x2='935' y2='279.5' stroke='#c4c4c4'/><line x1='932' y1='269.5' x2='935' y2='269.5' stroke='#c4c4c4'/><line x1='932' y1='259.5' x2='935' y2='259.5' stroke='#c4c4c4'/><line x1='932' y1='249.5' x2='935' y2='249.5' stroke='#c4c4c4'/><line x1='932' y1='239.5' x2='935' y2='239.5' stroke='#c4c4c4'/><line x1='932' y1='229.5' x2='935' y2='229.5' stroke='#c4c4c4'/><line x1='932' y1='219.5' x2='935' y2='219.5' stroke='#c4c4c4'/><line x1='932' y1='209.5' x2='935' y2='209.5' stroke='#c4c4c4'/><line x1='932' y1='199.5' x2='935' y2='199.5' stroke='#c4c4c4'/><line x1='932' y1='189.5' x2='935' y2='189.5' stroke='#c4c4c4'/><line x1='932' y1='179.5' x2='935' y2='179.5' stroke='#c4c4c4'/><line x1='932' y1='169.5' x2='935' y2='169.5' stroke='#c4c4c4'/><line x1='932' y1='159.5' x2='935' y2='159.5' stroke='#c4c4c4'/><line x1='932' y1='149.5' x2='935' y2='149.5' stroke='#c4c4c4'/><line x1='932' y1='139.5' x2='935' y2='139.5' stroke='#c4c4c4'/><line x1='932' y1='129.5' x2='935' y2='129.5' stroke='#c4c4c4'/><line x1='932' y1='119.5' x2='935' y2='119.5' stroke='#c4c4c4'/><line x1='932' y1='109.5' x2='935' y2='109.5' stroke='#c4c4c4'/><line x1='1344' y1='299.5' x2='1350' y2='299.5' stroke='#c4c4c4'/><line x1='1344' y1='268.5' x2='1350' y2='268.5' stroke='#c4c4c4'/><line x1='1344' y1='237.5' x2='1350' y2='237.5' stroke='#c4c4c4'/><line x1='1344' y1='207.5' x2='1350' y2='207.5' stroke='#c4c4c4'/><line x1='1344' y1='176.5' x2='1350' y2='176.5' stroke='#c4c4c4'/><line x1='1344' y1='145.5' x2='1350' y2='145.5' stroke='#c4c4c4'/><line x1='1344' y1='114.5' x2='1350' y2='114.5' stroke='#c4c4c4'/><line x1='1344' y1='299.5' x2='1347' y2='299.5' stroke='#c4c4c4'/><line x1='1344' y1='289.5' x2='1347' y2='289.5' stroke='#c4c4c4'/><line x1='1344' y1='279.5' x2='1347' y2='279.5' stroke='#c4c4c4'/><line x1='1344' y1='269.5' x2='1347' y2='269.5' stroke='#c4c4c4'/><line x1='1344' y1='258.5' x2='1347' y2='258.5' stroke='#c4c4c4'/><line x1='1344' y1='248.5' x2='1347' y2='248.5' stroke='#c4c4c4'/><line x1='1344' y1='238.5' x2='1347' y2='238.5' stroke='#c4c4c4'/><line x1='1344' y1='227.5' x2='1347' y2='227.5' stroke='#c4c4c4'/><line x1='1344' y1='217.5' x2='1347' y2='217.5' stroke='#c4c4c4'/><line x1='1344' y1='207.5' x2='1347' y2='207.5' stroke='#c4c4c4'/><line x1='1344' y1='197.5' x2='1347' y2='197.5' stroke='#c4c4c4'/><line x1='1344' y1='186.5' x2='1347' y2='186.5' stroke='#c4c4c4'/><line x1='1344' y1='176.5' x2='1347' y2='176.5' stroke='#c4c4c4'/><line x1='1344' y1='166.5' x2='1347' y2='166.5' stroke='#c4c4c4'/><line x1='1344' y1='156.5' x2='1347' y2='156.5' stroke='#c4c4c4'/><line x1='1344' y1='145.5' x2='1347' y2='145.5' stroke='#c4c4c4'/><line x1='1344' y1='135.5' x2='1347' y2='135.5' stroke='#c4c4c4'/><line x1='1344' y1='125.5' x2='1347' y2='125.5' stroke='#c4c4c4'/><line x1='1344' y1='114.5' x2='1347' y2='114.5' stroke='#c4c4c4'/><line x1='1344' y1='104.5' x2='1347' y2='104.5' stroke='#c4c4c4'/><line x1='943.5' y1='299' x2='943.5' y2='305' stroke='#c4c4c4'/><line x1='958.5' y1='299' x2='958.5' y2='305' stroke='#c4c4c4'/><line x1='973.5' y1='299' x2='973.5' y2='305' stroke='#c4c4c4'/><line x1='988.5' y1='299' x2='988.5' y2='305' stroke='#c4c4c4'/><line x1='1003.5' y1='299' x2='1003.5' y2='305' stroke='#c4c4c4'/><line x1='1018.5' y1='299' x2='1018.5' y2='305' stroke='#c4c4c4'/><line x1='1033.5' y1='299' x2='1033.5' y2='305' stroke='#c4c4c4'/><line x1='1048.5' y1='299' x2='1048.5' y2='305' stroke='#c4c4c4'/><line x1='1064.5' y1='299' x2='1064.5' y2='305' stroke='#c4c4c4'/><line x1='1079.5' y1='299' x2='1079.5' y2='305' stroke='#c4c4c4'/><line x1='1094.5' y1='299' x2='1094.5' y2='305' stroke='#c4c4c4'/><line x1='1109.5' y1='299' x2='1109.5' y2='305' stroke='#c4c4c4'/><line x1='1124.5' y1='299' x2='1124.5' y2='305' stroke='#c4c4c4'/><line x1='1139.5' y1='299' x2='1139.5' y2='305' stroke='#c4c4c4'/><line x1='1154.5' y1='299' x2='1154.5' y2='305' stroke='#c4c4c4'/><line x1='1169.5' y1='299' x2='1169.5' y2='305' stroke='#c4c4c4'/><line x1='1184.5' y1='299' x2='1184.5' y2='305' stroke='#c4c4c4'/><line x1='1199.5' y1='299' x2='1199.5' y2='305' stroke='#c4c4c4'/><line x1='1214.5' y1='299' x2='1214.5' y2='305' stroke='#c4c4c4'/><line x1='1229.5' y1='299' x2='1229.5' y2='305' stroke='#c4c4c4'/><line x1='1244.5' y1='299' x2='1244.5' y2='305' stroke='#c4c4c4'/><line x1='1260.5' y1='299' x2='1260.5' y2='305' stroke='#c4c4c4'/><line x1='1275.5' y1='299' x2='1275.5' y2='305' stroke='#c4c4c4'/><line x1='1290.5' y1='299' x2='1290.5' y2='305' stroke='#c4c4c4'/><line x1='1305.5' y1='299' x2='1305.5' y2='305' stroke='#c4c4c4'/><line x1='1320.5' y1='299' x2='1320.5' y2='305' stroke='#c4c4c4'/><line x1='1335.5' y1='299' x2='1335.5' y2='305' stroke='#c4c4c4'/><line x1='934.5' y1='299' x2='934.5' y2='302' stroke='#c4c4c4'/><line x1='937.5' y1='299' x2='937.5' y2='302' stroke='#c4c4c4'/><line x1='940.5' y1='299' x2='940.5' y2='302' stroke='#c4c4c4'/><line x1='943.5' y1='299' x2='943.5' y2='302' stroke='#c4c4c4'/><line x1='946.5' y1='299' x2='946.5' y2='302' stroke='#c4c4c4'/><line x1='949.5' y1='299' x2='949.5' y2='302' stroke='#c4c4c4'/><line x1='952.5' y1='299' x2='952.5' y2='302' stroke='#c4c4c4'/><line x1='955.5' y1='299' x2='955.5' y2='302' stroke='#c4c4c4'/><line x1='958.5' y1='299' x2='958.5' y2='302' stroke='#c4c4c4'/><line x1='961.5' y1='299' x2='961.5' y2='302' stroke='#c4c4c4'/><line x1='964.5' y1='299' x2='964.5' y2='302' stroke='#c4c4c4'/><line x1='967.5' y1='299' x2='967.5' y2='302' stroke='#c4c4c4'/><line x1='970.5' y1='299' x2='970.5' y2='302' stroke='#c4c4c4'/><line x1='973.5' y1='299' x2='973.5' y2='302' stroke='#c4c4c4'/><line x1='976.5' y1='299' x2='976.5' y2='302' stroke='#c4c4c4'/><line x1='979.5' y1='299' x2='979.5' y2='302' stroke='#c4c4c4'/><line x1='982.5' y1='299' x2='982.5' y2='302' stroke='#c4c4c4'/><line x1='985.5' y1='299' x2='985.5' y2='302' stroke='#c4c4c4'/><line x1='988.5' y1='299' x2='988.5' y2='302' stroke='#c4c4c4'/><line x1='991.5' y1='299' x2='991.5' y2='302' stroke='#c4c4c4'/><line x1='994.5' y1='299' x2='994.5' y2='302' stroke='#c4c4c4'/><line x1='997.5' y1='299' x2='997.5' y2='302' stroke='#c4c4c4'/><line x1='1000.5' y1='299' x2='1000.5' y2='302' stroke='#c4c4c4'/><line x1='1003.5' y1='299' x2='1003.5' y2='302' stroke='#c4c4c4'/><line x1='1006.5' y1='299' x2='1006.5' y2='302' stroke='#c4c4c4'/><line x1='1009.5' y1='299' x2='1009.5' y2='302' stroke='#c4c4c4'/><line x1='1012.5' y1='299' x2='1012.5' y2='302' stroke='#c4c4c4'/><line x1='1015.5' y1='299' x2='1015.5' y2='302' stroke='#c4c4c4'/><line x1='1018.5' y1='299' x2='1018.5' y2='302' stroke='#c4c4c4'/><line x1='1021.5' y1='299' x2='1021.5' y2='302' stroke='#c4c4c4'/><line x1='1024.5' y1='299' x2='1024.5' y2='302' stroke='#c4c4c4'/><line x1='1027.5' y1='299' x2='1027.5' y2='302' stroke='#c4c4c4'/><line x1='1030.5' y1='299' x2='1030.5' y2='302' stroke='#c4c4c4'/><line x1='1033.5' y1='299' x2='1033.5' y2='302' stroke='#c4c4c4'/><line x1='1036.5' y1='299' x2='1036.5' y2='302' stroke='#c4c4c4'/><line x1='1039.5' y1='299' x2='1039.5' y2='302' stroke='#c4c4c4'/><line x1='1042.5' y1='299' x2='1042.5' y2='302' stroke='#c4c4c4'/><line x1='1045.5' y1='299' x2='1045.5' y2='302' stroke='#c4c4c4'/><line x1='1048.5' y1='299' x2='1048.5' y2='302' stroke='#c4c4c4'/><line x1='1051.5' y1='299' x2='1051.5' y2='302' stroke='#c4c4c4'/><line x1='1054.5' y1='299' x2='1054.5' y2='302' stroke='#c4c4c4'/><line x1='1057.5' y1='299' x2='1057.5' y2='302' stroke='#c4c4c4'/><line x1='1060.5' y1='299' x2='1060.5' y2='302' stroke='#c4c4c4'/><line x1='1063.5' y1='299' x2='1063.5' y2='302' stroke='#c4c4c4'/><line x1='1066.5' y1='299' x2='1066.5' y2='302' stroke='#c4c4c4'/><line x1='1069.5' y1='299' x2='1069.5' y2='302' stroke='#c4c4c4'/><line x1='1073.5' y1='299' x2='1073.5' y2='302' stroke='#c4c4c4'/><line x1='1076.5' y1='299' x2='1076.5' y2='302' stroke='#c4c4c4'/><line x1='1079.5' y1='299' x2='1079.5' y2='302' stroke='#c4c4c4'/><line x1='1082.5' y1='299' x2='1082.5' y2='302' stroke='#c4c4c4'/><line x1='1085.5' y1='299' x2='1085.5' y2='302' stroke='#c4c4c4'/><line x1='1088.5' y1='299' x2='1088.5' y2='302' stroke='#c4c4c4'/><line x1='1091.5' y1='299' x2='1091.5' y2='302' stroke='#c4c4c4'/><line x1='1094.5' y1='299' x2='1094.5' y2='302' stroke='#c4c4c4'/><line x1='1097.5' y1='299' x2='1097.5' y2='302' stroke='#c4c4c4'/><line x1='1100.5' y1='299' x2='1100.5' y2='302' stroke='#c4c4c4'/><line x1='1103.5' y1='299' x2='1103.5' y2='302' stroke='#c4c4c4'/><line x1='1106.5' y1='299' x2='1106.5' y2='302' stroke='#c4c4c4'/><line x1='1109.5' y1='299' x2='1109.5' y2='302' stroke='#c4c4c4'/><line x1='1112.5' y1='299' x2='1112.5' y2='302' stroke='#c4c4c4'/><line x1='1115.5' y1='299' x2='1115.5' y2='302' stroke='#c4c4c4'/><line x1='1118.5' y1='299' x2='1118.5' y2='302' stroke='#c4c4c4'/><line x1='1121.5' y1='299' x2='1121.5' y2='302' stroke='#c4c4c4'/><line x1='1124.5' y1='299' x2='1124.5' y2='302' stroke='#c4c4c4'/><line x1='1127.5' y1='299' x2='1127.5' y2='302' stroke='#c4c4c4'/><line x1='1130.5' y1='299' x2='1130.5' y2='302' stroke='#c4c4c4'/><line x1='1133.5' y1='299' x2='1133.5' y2='302' stroke='#c4c4c4'/><line x1='1136.5' y1='299' x2='1136.5' y2='302' stroke='#c4c4c4'/><line x1='1139.5' y1='299' x2='1139.5' y2='302' stroke='#c4c4c4'/><line x1='1142.5' y1='299' x2='1142.5' y2='302' stroke='#c4c4c4'/><line x1='1145.5' y1='299' x2='1145.5' y2='302' stroke='#c4c4c4'/><line x1='1148.5' y1='299' x2='1148.5' y2='302' stroke='#c4c4c4'/><line x1='1151.5' y1='299' x2='1151.5' y2='302' stroke='#c4c4c4'/><line x1='1154.5' y1='299' x2='1154.5' y2='302' stroke='#c4c4c4'/><line x1='1157.5' y1='299' x2='1157.5' y2='302' stroke='#c4c4c4'/><line x1='1160.5' y1='299' x2='1160.5' y2='302' stroke='#c4c4c4'/><line x1='1163.5' y1='299' x2='1163.5' y2='302' stroke='#c4c4c4'/><line x1='1166.5' y1='299' x2='1166.5' y2='302' stroke='#c4c4c4'/><line x1='1169.5' y1='299' x2='1169.5' y2='302' stroke='#c4c4c4'/><line x1='1172.5' y1='299' x2='1172.5' y2='302' stroke='#c4c4c4'/><line x1='1175.5' y1='299' x2='1175.5' y2='302' stroke='#c4c4c4'/><line x1='1178.5' y1='299' x2='1178.5' y2='302' stroke='#c4c4c4'/><line x1='1181.5' y1='299' x2='1181.5' y2='302' stroke='#c4c4c4'/><line x1='1184.5' y1='299' x2='1184.5' y2='302' stroke='#c4c4c4'/><line x1='1187.5' y1='299' x2='1187.5' y2='302' stroke='#c4c4c4'/><line x1='1190.5' y1='299' x2='1190.5' y2='302' stroke='#c4c4c4'/><line x1='1193.5' y1='299' x2='1193.5' y2='302' stroke='#c4c4c4'/><line x1='1196.5' y1='299' x2='1196.5' y2='302' stroke='#c4c4c4'/><line x1='1199.5' y1='299' x2='1199.5' y2='302' stroke='#c4c4c4'/><line x1='1202.5' y1='299' x2='1202.5' y2='302' stroke='#c4c4c4'/><line x1='1205.5' y1='299' x2='1205.5' y2='302' stroke='#c4c4c4'/><line x1='1208.5' y1='299' x2='1208.5' y2='302' stroke='#c4c4c4'/><line x1='1211.5' y1='299' x2='1211.5' y2='302' stroke='#c4c4c4'/><line x1='1214.5' y1='299' x2='1214.5' y2='302' stroke='#c4c4c4'/><line x1='1217.5' y1='299' x2='1217.5' y2='302' stroke='#c4c4c4'/><line x1='1220.5' y1='299' x2='1220.5' y2='302' stroke='#c4c4c4'/><line x1='1223.5' y1='299' x2='1223.5' y2='302' stroke='#c4c4c4'/><line x1='1226.5' y1='299' x2='1226.5' y2='302' stroke='#c4c4c4'/><line x1='1229.5' y1='299' x2='1229.5' y2='302' stroke='#c4c4c4'/><line x1='1232.5' y1='299' x2='1232.5' y2='302' stroke='#c4c4c4'/><line x1='1235.5' y1='299' x2='1235.5' y2='302' stroke='#c4c4c4'/><line x1='1238.5' y1='299' x2='1238.5' y2='302' stroke='#c4c4c4'/><line x1='1241.5' y1='299' x2='1241.5' y2='302' stroke='#c4c4c4'/><line x1='1244.5' y1='299' x2='1244.5' y2='302' stroke='#c4c4c4'/><line x1='1247.5' y1='299' x2='1247.5' y2='302' stroke='#c4c4c4'/><line x1='1250.5' y1='299' x2='1250.5' y2='302' stroke='#c4c4c4'/><line x1='1253.5' y1='299' x2='1253.5' y2='302' stroke='#c4c4c4'/><line x1='1256.5' y1='299' x2='1256.5' y2='302' stroke='#c4c4c4'/><line x1='1259.5' y1='299' x2='1259.5' y2='302' stroke='#c4c4c4'/><line x1='1262.5' y1='299' x2='1262.5' y2='302' stroke='#c4c4c4'/><line x1='1265.5' y1='299' x2='1265.5' y2='302' stroke='#c4c4c4'/><line x1='1269.5' y1='299' x2='1269.5' y2='302' stroke='#c4c4c4'/><line x1='1272.5' y1='299' x2='1272.5' y2='302' stroke='#c4c4c4'/><line x1='1275.5' y1='299' x2='1275.5' y2='302' stroke='#c4c4c4'/><line x1='1278.5' y1='299' x2='1278.5' y2='302' stroke='#c4c4c4'/><line x1='1281.5' y1='299' x2='1281.5' y2='302' stroke='#c4c4c4'/><line x1='1284.5' y1='299' x2='1284.5' y2='302' stroke='#c4c4c4'/><line x1='1287.5' y1='299' x2='1287.5' y2='302' stroke='#c4c4c4'/><line x1='1290.5' y1='299' x2='1290.5' y2='302' stroke='#c4c4c4'/><line x1='1293.5' y1='299' x2='1293.5' y2='302' stroke='#c4c4c4'/><line x1='1296.5' y1='299' x2='1296.5' y2='302' stroke='#c4c4c4'/><line x1='1299.5' y1='299' x2='1299.5' y2='302' stroke='#c4c4c4'/><line x1='1302.5' y1='299' x2='1302.5' y2='302' stroke='#c4c4c4'/><line x1='1305.5' y1='299' x2='1305.5' y2='302' stroke='#c4c4c4'/><line x1='1308.5' y1='299' x2='1308.5' y2='302' stroke='#c4c4c4'/><line x1='1311.5' y1='299' x2='1311.5' y2='302' stroke='#c4c4c4'/><line x1='1314.5' y1='299' x2='1314.5' y2='302' stroke='#c4c4c4'/><line x1='1317.5' y1='299' x2='1317.5' y2='302' stroke='#c4c4c4'/><line x1='1320.5' y1='299' x2='1320.5' y2='302' stroke='#c4c4c4'/><line x1='1323.5' y1='299' x2='1323.5' y2='302' stroke='#c4c4c4'/><line x1='1326.5' y1='299' x2='1326.5' y2='302' stroke='#c4c4c4'/><line x1='1329.5' y1='299' x2='1329.5' y2='302' stroke='#c4c4c4'/><line x1='1332.5' y1='299' x2='1332.5' y2='302' stroke='#c4c4c4'/><line x1='1335.5' y1='299' x2='1335.5' y2='302' stroke='#c4c4c4'/><line x1='1338.5' y1='299' x2='1338.5' y2='302' stroke='#c4c4c4'/><line x1='1341.5' y1='299' x2='1341.5' y2='302' stroke='#c4c4c4'/><line x1='1344.5' y1='299' x2='1344.5' y2='302' stroke='#c4c4c4'/><rect x='998' y='119' width='4' height='180' fill='#e8687d'/><rect x='1003' y='248' width='5' height='51' fill='#6bb36b'/><rect x='1013' y='149' width='4' height='150' fill='#e8687d'/><rect x='1018' y='257' width='5' height='42' fill='#6bb36b'/></svg><svg style='left:0;top:0' width='1506' height='825' viewBox='0 0 1506 825'><line x1='1002.8' y1='119.5' x2='1018.5' y2='148.8' stroke='#5ab4d2' stroke-width='1.8'/></svg>
<div class='t' style='left:917.00px;top:292.50px;font-size:12px;transform:scale(0.7500,1.0000);transform-origin:0 0;color:#111'>0</div>
<div class='t' style='left:916.10px;top:262.50px;font-size:12px;transform:scale(0.9000,1.0000);transform-origin:0 0;color:#111'>1</div>
<div class='t' style='left:917.00px;top:232.50px;font-size:12px;transform:scale(0.7500,1.0000);transform-origin:0 0;color:#111'>2</div>
<div class='t' style='left:916.10px;top:202.50px;font-size:12px;transform:scale(0.9000,1.0000);transform-origin:0 0;color:#111'>3</div>
<div class='t' style='left:917.00px;top:172.50px;font-size:12px;transform:scale(0.6429,1.0000);transform-origin:0 0;color:#111'>4</div>
<div class='t' style='left:916.10px;top:142.50px;font-size:12px;transform:scale(0.9000,1.0000);transform-origin:0 0;color:#111'>5</div>
<div class='t' style='left:917.00px;top:112.50px;font-size:12px;transform:scale(0.7500,1.0000);transform-origin:0 0;color:#111'>6</div>
<div class='t' style='left:1357.00px;top:292.39px;font-size:12px;transform:scale(0.8333,1.0556);transform-origin:0 0;color:#111'>0</div>
<div class='t' style='left:1357.00px;top:261.77px;font-size:12px;transform:scale(0.8333,0.9500);transform-origin:0 0;color:#111'>2,000</div>
<div class='t' style='left:1357.00px;top:230.94px;font-size:12px;transform:scale(0.8333,0.9500);transform-origin:0 0;color:#111'>4,000</div>
<div class='t' style='left:1357.00px;top:200.11px;font-size:12px;transform:scale(0.8333,0.9500);transform-origin:0 0;color:#111'>6,000</div>
<div class='t' style='left:1357.00px;top:169.28px;font-size:12px;transform:scale(0.8333,0.9500);transform-origin:0 0;color:#111'>8,000</div>
<div class='t' style='left:1356.11px;top:138.45px;font-size:12px;transform:scale(0.8857,0.9500);transform-origin:0 0;color:#111'>10,000</div>
<div class='t' style='left:1356.11px;top:107.62px;font-size:12px;transform:scale(0.8857,0.9500);transform-origin:0 0;color:#111'>12,000</div>
<div class='t' style='left:950.00px;top:312.00px;font-size:12px;transform-origin:0 0;transform:rotate(90deg) scale(0.9273,1.0000);color:#111'>2023年2月</div>
<div class='t' style='left:965.00px;top:312.00px;font-size:12px;transform-origin:0 0;transform:rotate(90deg) scale(0.9273,1.0000);color:#111'>2023年3月</div>
<div class='t' style='left:980.00px;top:312.00px;font-size:12px;transform-origin:0 0;transform:rotate(90deg) scale(0.9273,1.0000);color:#111'>2023年4月</div>
<div class='t' style='left:995.00px;top:312.00px;font-size:12px;transform-origin:0 0;transform:rotate(90deg) scale(0.9273,1.0000);color:#111'>2023年5月</div>
<div class='t' style='left:1010.00px;top:312.00px;font-size:12px;transform-origin:0 0;transform:rotate(90deg) scale(0.9273,1.0000);color:#111'>2023年6月</div>
<div class='t' style='left:1025.00px;top:312.00px;font-size:12px;transform-origin:0 0;transform:rotate(90deg) scale(0.9273,1.0000);color:#111'>2023年7月</div>
<div class='t' style='left:1040.00px;top:312.00px;font-size:12px;transform-origin:0 0;transform:rotate(90deg) scale(0.9273,1.0000);color:#111'>2023年8月</div>
<div class='t' style='left:1055.00px;top:312.00px;font-size:12px;transform-origin:0 0;transform:rotate(90deg) scale(0.9273,1.0000);color:#111'>2023年9月</div>
<div class='t' style='left:1071.00px;top:312.00px;font-size:12px;transform-origin:0 0;transform:rotate(90deg) scale(0.9194,1.0000);color:#111'>2023年10月</div>
<div class='t' style='left:1086.00px;top:312.00px;font-size:12px;transform-origin:0 0;transform:rotate(90deg) scale(0.9344,1.0000);color:#111'>2023年11月</div>
<div class='t' style='left:1101.00px;top:312.00px;font-size:12px;transform-origin:0 0;transform:rotate(90deg) scale(0.9194,1.0000);color:#111'>2023年12月</div>
<div class='t' style='left:1116.00px;top:312.00px;font-size:12px;transform-origin:0 0;transform:rotate(90deg) scale(0.9273,1.0000);color:#111'>2024年1月</div>
<div class='t' style='left:1131.00px;top:312.00px;font-size:12px;transform-origin:0 0;transform:rotate(90deg) scale(0.9273,1.0000);color:#111'>2024年2月</div>
<div class='t' style='left:1146.00px;top:312.00px;font-size:12px;transform-origin:0 0;transform:rotate(90deg) scale(0.9273,1.0000);color:#111'>2024年3月</div>
<div class='t' style='left:1161.00px;top:312.00px;font-size:12px;transform-origin:0 0;transform:rotate(90deg) scale(0.9273,1.0000);color:#111'>2024年4月</div>
<div class='t' style='left:1176.00px;top:312.00px;font-size:12px;transform-origin:0 0;transform:rotate(90deg) scale(0.9273,1.0000);color:#111'>2024年5月</div>
<div class='t' style='left:1191.00px;top:312.00px;font-size:12px;transform-origin:0 0;transform:rotate(90deg) scale(0.9273,1.0000);color:#111'>2024年6月</div>
<div class='t' style='left:1206.00px;top:312.00px;font-size:12px;transform-origin:0 0;transform:rotate(90deg) scale(0.9273,1.0000);color:#111'>2024年7月</div>
<div class='t' style='left:1221.00px;top:312.00px;font-size:12px;transform-origin:0 0;transform:rotate(90deg) scale(0.9273,1.0000);color:#111'>2024年8月</div>
<div class='t' style='left:1236.00px;top:312.00px;font-size:12px;transform-origin:0 0;transform:rotate(90deg) scale(0.9273,1.0000);color:#111'>2024年9月</div>
<div class='t' style='left:1251.00px;top:312.00px;font-size:12px;transform-origin:0 0;transform:rotate(90deg) scale(0.9194,1.0000);color:#111'>2024年10月</div>
<div class='t' style='left:1267.00px;top:312.00px;font-size:12px;transform-origin:0 0;transform:rotate(90deg) scale(0.9344,1.0000);color:#111'>2024年11月</div>
<div class='t' style='left:1282.00px;top:312.00px;font-size:12px;transform-origin:0 0;transform:rotate(90deg) scale(0.9194,1.0000);color:#111'>2024年12月</div>
<div class='t' style='left:1297.00px;top:312.00px;font-size:12px;transform-origin:0 0;transform:rotate(90deg) scale(0.9273,1.0000);color:#111'>2025年1月</div>
<div class='t' style='left:1312.00px;top:312.00px;font-size:12px;transform-origin:0 0;transform:rotate(90deg) scale(0.9273,1.0000);color:#111'>2025年2月</div>
<div class='t' style='left:1327.00px;top:312.00px;font-size:12px;transform-origin:0 0;transform:rotate(90deg) scale(0.9273,1.0000);color:#111'>2025年3月</div>
<div class='t' style='left:1342.00px;top:312.00px;font-size:12px;transform-origin:0 0;transform:rotate(90deg) scale(0.9273,1.0000);color:#111'>2025年4月</div>
<div class='abs' style='left:1396px;top:101px;width:98px;height:74px;border:1px solid #c8c8c8;background:#fff'></div>
<div class='abs' style='left:1407px;top:119px;width:19px;height:1px;background:#5ab4d2'></div>
<div class='abs' style='left:1407px;top:131px;width:19px;height:14px;background:#e8687d;border:1px solid #d4586c'></div>
<div class='abs' style='left:1407px;top:149px;width:19px;height:14px;background:#6bb36b;border:1px solid #5aa05a'></div>
<div class='t' style='left:1428.60px;top:112.50px;font-size:12px;transform:scale(0.9875,1.0000);transform-origin:0 0;color:#111'>売上総数</div>
<div class='t' style='left:1428.60px;top:130.00px;font-size:12px;transform:scale(0.9875,1.0000);transform-origin:0 0;color:#111'>売上金額</div>
<div class='t' style='left:1428.60px;top:148.00px;font-size:12px;transform:scale(1.0304,1.0000);transform-origin:0 0;color:#111'>粗利</div>
<svg style='left:911.5px;top:392px' width='14' height='14' viewBox='0 0 14 14'><circle cx='7' cy='7' r='6.4' fill='#0a5bc4'/><circle cx='7' cy='7' r='2.7' fill='#fff'/></svg>
<div class='t' style='left:930.48px;top:393.00px;font-size:12px;transform:scale(1.0242,1.0000);transform-origin:0 0;color:#111'>選択月</div>
<svg style='left:978px;top:392.5px' width='14' height='14' viewBox='0 0 14 14'><circle cx='7' cy='7' r='6' fill='#fff' stroke='#3a3a3a' stroke-width='1'/></svg>
<div class='t' style='left:996.95px;top:392.00px;font-size:12px;transform:scale(1.0455,1.0000);transform-origin:0 0;color:#111'>範囲</div>
<div class='abs' style='left:1035px;top:389px;width:51px;height:23px;background:#f0f0f0;border:1px solid #a8a8a8'></div>
<div class='t' style='left:1037.50px;top:393.50px;font-size:12px;transform:scale(0.8704,1.0000);transform-origin:0 0;color:#808080'>2024</div>
<div class='abs' style='left:1070px;top:390px;width:14px;height:21px;background:#f6f6f6'></div>
<svg style='left:1073px;top:392px' width='8' height='16' viewBox='0 0 8 16'><path d='M1 5 L4 2 L7 5 Z M1 11 L4 14 L7 11 Z' fill='#a0a0a0'/></svg>
<div class='abs' style='left:1070px;top:400px;width:14px;height:1px;background:#dcdcdc'></div>
<div class='t' style='left:1095.00px;top:393.00px;font-size:12px;transform:scale(0.9167,1.0000);transform-origin:0 0;color:#8a8a8a'>年</div>
<div class='abs' style='left:1116px;top:390px;width:46px;height:21px;background:#f8f8f8'></div>
<div class='t' style='left:1118.30px;top:395.00px;font-size:12px;transform:scale(1.2000,1.0000);transform-origin:0 0;color:#808080'>3</div>
<svg style='left:1148px;top:398px' width='10' height='6' viewBox='0 0 10 6'><path d='M0.5 0.5 L5 5 L9.5 0.5' fill='none' stroke='#a0a0a0' stroke-width='1'/></svg>
<div class='t' style='left:1169.43px;top:392.00px;font-size:12px;transform:scale(1.0714,1.0000);transform-origin:0 0;color:#8a8a8a'>月～</div>
<div class='abs' style='left:1204px;top:389px;width:51px;height:23px;background:#f0f0f0;border:1px solid #a8a8a8'></div>
<div class='t' style='left:1206.50px;top:393.50px;font-size:12px;transform:scale(0.9038,1.0000);transform-origin:0 0;color:#808080'>2025</div>
<div class='abs' style='left:1239px;top:390px;width:14px;height:21px;background:#f6f6f6'></div>
<svg style='left:1242px;top:392px' width='8' height='16' viewBox='0 0 8 16'><path d='M1 5 L4 2 L7 5 Z M1 11 L4 14 L7 11 Z' fill='#a0a0a0'/></svg>
<div class='abs' style='left:1239px;top:400px;width:14px;height:1px;background:#dcdcdc'></div>
<div class='t' style='left:1264.00px;top:393.00px;font-size:12px;transform:scale(0.9167,1.0000);transform-origin:0 0;color:#8a8a8a'>年</div>
<div class='abs' style='left:1286px;top:390px;width:46px;height:21px;background:#f8f8f8'></div>
<div class='t' style='left:1289.50px;top:395.00px;font-size:12px;transform:scale(1.0000,1.0000);transform-origin:0 0;color:#808080'>2</div>
<svg style='left:1318px;top:398px' width='10' height='6' viewBox='0 0 10 6'><path d='M0.5 0.5 L5 5 L9.5 0.5' fill='none' stroke='#a0a0a0' stroke-width='1'/></svg>
<div class='t' style='left:1338.89px;top:392.00px;font-size:12px;transform:scale(1.1111,1.0000);transform-origin:0 0;color:#8a8a8a'>月</div>
<div class='t' style='left:1367.99px;top:393.00px;font-size:12px;transform:scale(1.0068,1.0000);transform-origin:0 0;color:#111'>内訳:指定範囲</div>
<div class='abs' style='left:907px;top:415px;width:597px;height:408px;background:#fff'></div>
<div class='abs' style='left:908px;top:416px;width:596px;height:25px;background:#f0f0f0'></div>
<div class='abs' style='left:907px;top:415px;width:597px;height:1px;background:#a0a0a0'></div>
<div class='abs' style='left:907px;top:441px;width:597px;height:1px;background:#a0a0a0'></div>
<div class='abs' style='left:907px;top:415px;width:1px;height:408px;background:#a0a0a0'></div>
<div class='abs' style='left:930px;top:415px;width:1px;height:27px;background:#a0a0a0'></div>
<div class='t' style='left:935.50px;top:421.00px;font-size:12px;transform:scale(0.9000,1.0000);transform-origin:0 0;color:#6d6d6d'>得意先コード</div>
<div class='abs' style='left:1006px;top:415px;width:1px;height:27px;background:#a0a0a0'></div>
<div class='t' style='left:1011.50px;top:421.00px;font-size:12px;transform:scale(0.9722,1.0000);transform-origin:0 0;color:#6d6d6d'>得意先</div>
<div class='abs' style='left:1162px;top:415px;width:1px;height:27px;background:#a0a0a0'></div>
<div class='t' style='left:1167.50px;top:421.00px;font-size:12px;transform:scale(1.0000,1.0000);transform-origin:0 0;color:#6d6d6d'>数量</div>
<div class='abs' style='left:1228px;top:415px;width:1px;height:27px;background:#a0a0a0'></div>
<div class='t' style='left:1233.50px;top:421.00px;font-size:12px;transform:scale(1.0294,1.0000);transform-origin:0 0;color:#6d6d6d'>単位名</div>
<div class='abs' style='left:1294px;top:415px;width:1px;height:27px;background:#a0a0a0'></div>
<div class='t' style='left:1299.50px;top:421.00px;font-size:12px;transform:scale(1.0000,1.0000);transform-origin:0 0;color:#6d6d6d'>総数量</div>
<div class='abs' style='left:1346px;top:415px;width:1px;height:27px;background:#a0a0a0'></div>
<div class='t' style='left:1351.50px;top:421.00px;font-size:12px;transform:scale(1.0000,1.0000);transform-origin:0 0;color:#6d6d6d'>売上単価</div>
<div class='abs' style='left:1410px;top:415px;width:1px;height:27px;background:#a0a0a0'></div>
<div class='t' style='left:1415.50px;top:421.00px;font-size:12px;transform:scale(0.9792,1.0000);transform-origin:0 0;color:#6d6d6d'>売上金額</div>
<div class='abs' style='left:1496px;top:415px;width:1px;height:27px;background:#a0a0a0'></div>
<div class='abs' style='left:1497px;top:416px;width:7px;height:25px;overflow:hidden'>
<div class='t' style='left:3.95px;top:5.00px;font-size:12px;transform:scale(1.0455,1.0000);transform-origin:0 0;color:#6d6d6d'>原価</div>
</div>
<div class='abs' style='left:908px;top:806px;width:596px;height:17px;background:#f0f0f0'></div>
<div class='abs' style='left:909px;top:807px;width:16px;height:15px;background:#fff;border:1px solid #a0a0a0'></div>
<svg style='left:0;top:0' width='1506' height='825'><path d='M918.0 810.5 L914.0 814.5 L918.0 818.5 Z' fill='#707070'/></svg>
<div class='abs' style='left:925px;top:807px;width:409px;height:15px;background:#fff;border:1px solid #a0a0a0'></div>
<div class='abs' style='left:1487px;top:807px;width:16px;height:15px;background:#fff;border:1px solid #a0a0a0'></div>
<svg style='left:0;top:0' width='1506' height='825'><path d='M1493.5 810.5 L1497.5 814.5 L1493.5 818.5 Z' fill='#707070'/></svg>
<div class='abs' style='left:1504px;top:0px;width:2px;height:825px;background:#262626'></div>
<div class='abs' style='left:0px;top:823px;width:1506px;height:2px;background:#262626'></div>
<div class='abs' style='left:0px;top:0px;width:1px;height:825px;background:#262626'></div>
</body></html>
